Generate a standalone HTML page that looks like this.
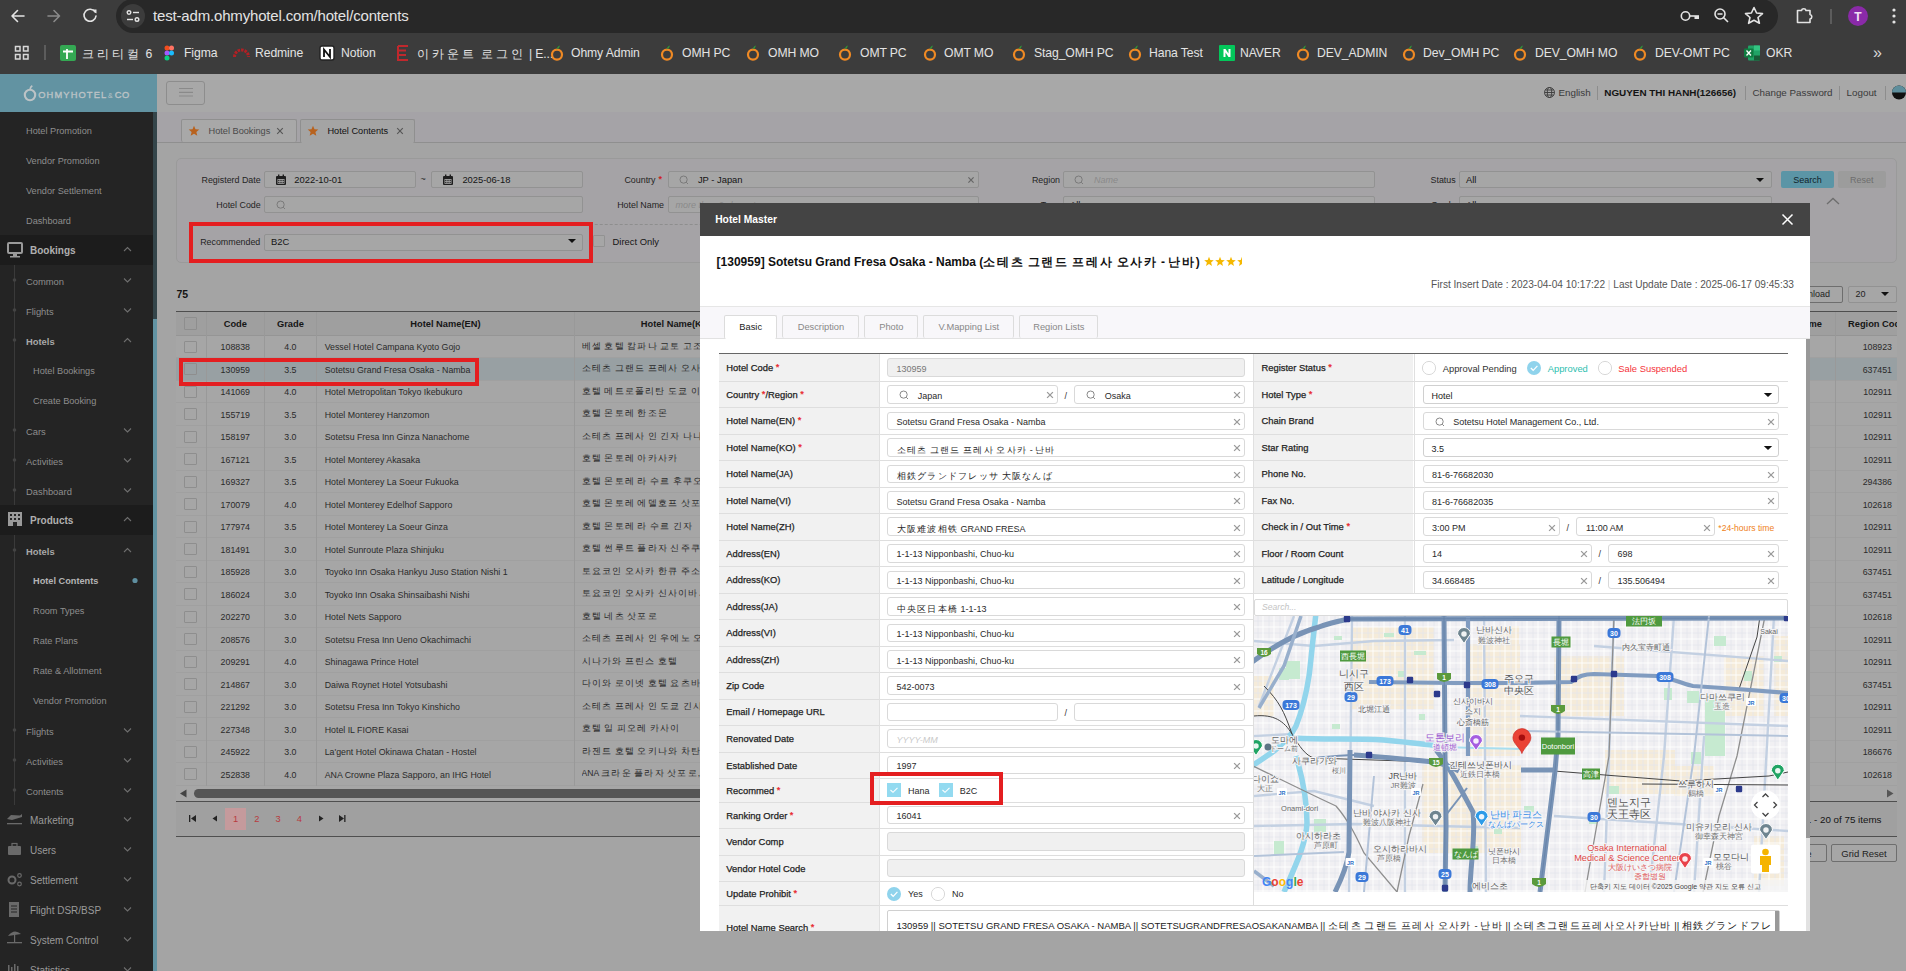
<!DOCTYPE html>
<html><head><meta charset="utf-8"><title>Hotel Contents</title><style>
*{box-sizing:content-box}
html,body{margin:0;padding:0}
body{width:1906px;height:971px;overflow:hidden;position:relative;background:#a4a4a4;font-family:'Liberation Sans',sans-serif}
.bm{position:absolute;top:46px;line-height:14px;font:12.2px 'Liberation Sans',sans-serif;color:#e3e3e3;white-space:nowrap;letter-spacing:-0.1px}
</style></head>
<body>
<div id="chrome" style="position:absolute;left:0;top:0;width:1906px;height:74px;background:#3c3c3c;">
<div style="position:absolute;left:116px;top:-1px;width:1662px;height:34px;border-radius:17px;background:#282828;"></div>
<svg style="position:absolute;left:0;top:0" width="116" height="33">
      <g fill="none" stroke="#e3e3e3" stroke-width="1.6" stroke-linecap="round" stroke-linejoin="round">
        <path d="M24 16 H12 M17.5 10.5 L12 16 L17.5 21.5"/>
      </g>
      <g fill="none" stroke="#8a8a8a" stroke-width="1.6" stroke-linecap="round" stroke-linejoin="round">
        <path d="M48 16 H59.5 M54 10.5 L59.5 16 L54 21.5"/>
      </g>
      <g fill="none" stroke="#e3e3e3" stroke-width="1.6" stroke-linecap="round">
        <path d="M95.2 12.2 A6 6 0 1 0 96 16"/>
      </g>
      <path d="M92.5 9.5 L96.5 9.5 L96.5 13.5 Z" fill="#e3e3e3"/>
    </svg>
<svg style="position:absolute;left:120px;top:3px" width="28" height="28">
      <circle cx="13" cy="13" r="12" fill="#3c3c3c"/>
      <g fill="none" stroke="#e3e3e3" stroke-width="1.4">
        <circle cx="9" cy="9.5" r="1.8"/><path d="M13 9.5 H19"/>
        <circle cx="17" cy="16.5" r="1.8"/><path d="M7 16.5 H13"/>
      </g>
    </svg>
<div style="position:absolute;left:153px;top:7px;font:15px 'Liberation Sans',sans-serif;color:#e3e3e3;letter-spacing:-0.17px;white-space:nowrap">test-adm.ohmyhotel.com/hotel/contents</div>
<svg style="position:absolute;left:1670px;top:0" width="236" height="34">
      <g fill="none" stroke="#e3e3e3" stroke-width="1.6">
        <circle cx="15.5" cy="16" r="4.2"/><path d="M19.7 16 H29"/><rect x="24.5" y="16" width="4.5" height="3" fill="#e3e3e3" stroke="none"/>
        <circle cx="50" cy="14" r="5"/><path d="M53.5 17.5 L58 22 M47.5 14 H52.5"/>
        <path d="M84 7.5 L86.6 13 L92.5 13.6 L88 17.5 L89.4 23.3 L84 20.3 L78.6 23.3 L80 17.5 L75.5 13.6 L81.4 13 Z" stroke-linejoin="round"/>
        <path d="M127.5 10.5 H131.5 A2.3 2.3 0 0 1 136 10.5 H140 V14.5 A2.3 2.3 0 0 1 140 19 V22.5 H127.5 Z" stroke-linejoin="round"/></g>
      <path d="M161 9 V24" stroke="#6a6a6a" stroke-width="1.4"/>
      <circle cx="188" cy="16" r="10" fill="#8a2aa8"/>
      <text x="188" y="20.5" text-anchor="middle" font-family="Liberation Sans" font-size="12" font-weight="bold" fill="#f0e0f5">T</text>
      <g fill="#e3e3e3"><circle cx="224" cy="10" r="1.6"/><circle cx="224" cy="16" r="1.6"/><circle cx="224" cy="22" r="1.6"/></g>
    </svg>
<svg style="position:absolute;left:0;top:38px" width="60" height="30">
      <g fill="none" stroke="#d8d8d8" stroke-width="1.5">
        <rect x="15.5" y="8.5" width="4.5" height="4.5"/><rect x="23.5" y="8.5" width="4.5" height="4.5"/>
        <rect x="15.5" y="16.5" width="4.5" height="4.5"/><rect x="23.5" y="16.5" width="4.5" height="4.5"/>
      </g>
      <path d="M45 7 V22" stroke="#6a6a6a" stroke-width="1.4"/>
    </svg>
<svg style="position:absolute;left:60px;top:45px" width="16" height="16"><rect x="0" y="0" width="16" height="16" rx="2" fill="#34a853"/><path d="M3 6.5 H13 M7 4 V14" stroke="#fff" stroke-width="1.8"/></svg>
<div class="bm" style="left:82px"><span style="letter-spacing:0.25em">크리티컬</span> 6</div>
<svg style="position:absolute;left:164px;top:45px" width="11" height="16"><rect x="0.5" y="0.5" width="5" height="5" rx="2.5" fill="#f24e1e"/><rect x="5" y="0.5" width="5" height="5" rx="2.5" fill="#ff7262"/><rect x="0.5" y="5.5" width="5" height="5" rx="2.5" fill="#a259ff"/><circle cx="7.5" cy="8" r="2.5" fill="#1abcfe"/><rect x="0.5" y="10.5" width="5" height="5" rx="2.5" fill="#0acf83"/></svg>
<div class="bm" style="left:184px">Figma</div>
<svg style="position:absolute;left:233px;top:45px" width="17" height="14"><path d="M1.5 12 A7 7 0 0 1 15.5 12" fill="none" stroke="#b32024" stroke-width="3" stroke-dasharray="2.5 1"/></svg>
<div class="bm" style="left:255px">Redmine</div>
<svg style="position:absolute;left:319px;top:45px" width="16" height="16"><rect x="1" y="1" width="14" height="14" rx="2" fill="#fff" stroke="#222" stroke-width="1.4"/><path d="M5 12 V4.5 L11 12 V4" fill="none" stroke="#111" stroke-width="1.8"/></svg>
<div class="bm" style="left:341px">Notion</div>
<svg style="position:absolute;left:396px;top:44px" width="14" height="18"><path d="M2 2 H12 M2 2 V16 H12 M2 6.5 H10 M2 11 H10" fill="none" stroke="#c0282d" stroke-width="2"/></svg>
<div class="bm" style="left:417px"><span style="letter-spacing:0.25em">이카운트</span> <span style="letter-spacing:0.25em">로그인</span> | E...</div>
<svg style="position:absolute;left:549px;top:42px" width="16" height="22"><circle cx="8" cy="12.6" r="5" fill="none" stroke="#f08a24" stroke-width="2.2"/><path d="M7.5 7.5 Q8.5 4 11 3.5 Q10.5 6.5 7.5 7.5 Z" fill="#2f9a3a"/></svg>
<div class="bm" style="left:571px">Ohmy Admin</div>
<svg style="position:absolute;left:659px;top:42px" width="16" height="22"><circle cx="8" cy="12.6" r="5" fill="none" stroke="#f08a24" stroke-width="2.2"/><path d="M7.5 7.5 Q8.5 4 11 3.5 Q10.5 6.5 7.5 7.5 Z" fill="#2f9a3a"/></svg>
<div class="bm" style="left:682px">OMH PC</div>
<svg style="position:absolute;left:745px;top:42px" width="16" height="22"><circle cx="8" cy="12.6" r="5" fill="none" stroke="#f08a24" stroke-width="2.2"/><path d="M7.5 7.5 Q8.5 4 11 3.5 Q10.5 6.5 7.5 7.5 Z" fill="#2f9a3a"/></svg>
<div class="bm" style="left:768px">OMH MO</div>
<svg style="position:absolute;left:837px;top:42px" width="16" height="22"><circle cx="8" cy="12.6" r="5" fill="none" stroke="#f08a24" stroke-width="2.2"/><path d="M7.5 7.5 Q8.5 4 11 3.5 Q10.5 6.5 7.5 7.5 Z" fill="#2f9a3a"/></svg>
<div class="bm" style="left:860px">OMT PC</div>
<svg style="position:absolute;left:922px;top:42px" width="16" height="22"><circle cx="8" cy="12.6" r="5" fill="none" stroke="#f08a24" stroke-width="2.2"/><path d="M7.5 7.5 Q8.5 4 11 3.5 Q10.5 6.5 7.5 7.5 Z" fill="#2f9a3a"/></svg>
<div class="bm" style="left:944px">OMT MO</div>
<svg style="position:absolute;left:1011px;top:42px" width="16" height="22"><circle cx="8" cy="12.6" r="5" fill="none" stroke="#f08a24" stroke-width="2.2"/><path d="M7.5 7.5 Q8.5 4 11 3.5 Q10.5 6.5 7.5 7.5 Z" fill="#2f9a3a"/></svg>
<div class="bm" style="left:1034px">Stag_OMH PC</div>
<svg style="position:absolute;left:1127px;top:42px" width="16" height="22"><circle cx="8" cy="12.6" r="5" fill="none" stroke="#f08a24" stroke-width="2.2"/><path d="M7.5 7.5 Q8.5 4 11 3.5 Q10.5 6.5 7.5 7.5 Z" fill="#2f9a3a"/></svg>
<div class="bm" style="left:1149px">Hana Test</div>
<svg style="position:absolute;left:1219px;top:45px" width="16" height="16"><rect width="16" height="16" rx="1" fill="#03c75a"/><path d="M4.5 12 V4 H6.5 L9.5 8.5 V4 H11.5 V12 H9.5 L6.5 7.5 V12 Z" fill="#fff"/></svg>
<div class="bm" style="left:1240px">NAVER</div>
<svg style="position:absolute;left:1295px;top:42px" width="16" height="22"><circle cx="8" cy="12.6" r="5" fill="none" stroke="#f08a24" stroke-width="2.2"/><path d="M7.5 7.5 Q8.5 4 11 3.5 Q10.5 6.5 7.5 7.5 Z" fill="#2f9a3a"/></svg>
<div class="bm" style="left:1317px">DEV_ADMIN</div>
<svg style="position:absolute;left:1401px;top:42px" width="16" height="22"><circle cx="8" cy="12.6" r="5" fill="none" stroke="#f08a24" stroke-width="2.2"/><path d="M7.5 7.5 Q8.5 4 11 3.5 Q10.5 6.5 7.5 7.5 Z" fill="#2f9a3a"/></svg>
<div class="bm" style="left:1423px">Dev_OMH PC</div>
<svg style="position:absolute;left:1512px;top:42px" width="16" height="22"><circle cx="8" cy="12.6" r="5" fill="none" stroke="#f08a24" stroke-width="2.2"/><path d="M7.5 7.5 Q8.5 4 11 3.5 Q10.5 6.5 7.5 7.5 Z" fill="#2f9a3a"/></svg>
<div class="bm" style="left:1535px">DEV_OMH MO</div>
<svg style="position:absolute;left:1632px;top:42px" width="16" height="22"><circle cx="8" cy="12.6" r="5" fill="none" stroke="#f08a24" stroke-width="2.2"/><path d="M7.5 7.5 Q8.5 4 11 3.5 Q10.5 6.5 7.5 7.5 Z" fill="#2f9a3a"/></svg>
<div class="bm" style="left:1655px">DEV-OMT PC</div>
<svg style="position:absolute;left:1744px;top:45px" width="16" height="16"><rect x="4" y="0.5" width="12" height="15" rx="1" fill="#21a366"/><rect x="10" y="0.5" width="6" height="5" fill="#33c481"/><rect x="10" y="10.5" width="6" height="5" fill="#185c37"/><rect x="0" y="3.5" width="9.5" height="9" rx="1" fill="#107c41"/><path d="M2.5 5.5 L7 10.5 M7 5.5 L2.5 10.5" stroke="#fff" stroke-width="1.3"/></svg>
<div class="bm" style="left:1766px">OKR</div>
<div style="position:absolute;left:1873px;top:44px;font:16px 'Liberation Sans';color:#d8d8d8">&#187;</div>
</div>
<div id="pg" style="position:absolute;left:0;top:0;width:1906px;height:971px">
<div id="sb" style="position:absolute;left:0;top:74px;width:157px;height:897px;background:#242424;overflow:hidden">
<div style="position:absolute;left:0;top:0;width:157px;height:38px;background:#6293a2"></div>
<svg style="position:absolute;left:20px;top:8px" width="115" height="24">
      <circle cx="10" cy="13" r="5.2" fill="none" stroke="#bcc3c6" stroke-width="2.1"/>
      <path d="M10 7.8 Q10.3 5 12.3 3.8" fill="none" stroke="#bcc3c6" stroke-width="1.7"/>
      <text x="18.2" y="16.3" font-family="Liberation Sans" font-size="9.3" fill="#bcc3c6" stroke="#bcc3c6" stroke-width="0.35" textLength="68" lengthAdjust="spacing">OHMYHOTEL</text>
      <text x="88" y="16.3" font-family="Liberation Sans" font-size="7" fill="#bcc3c6">&amp;</text>
      <text x="94.7" y="16.3" font-family="Liberation Sans" font-size="9.3" fill="#bcc3c6" stroke="#bcc3c6" stroke-width="0.35" textLength="14.5" lengthAdjust="spacing">CO</text>
    </svg>
<div style="position:absolute;left:153px;top:38px;width:4px;height:207px;background:#34454a"></div>
<div style="position:absolute;left:153px;top:245px;width:4px;height:652px;background:#6293a2"></div>
<div style="position:absolute;left:0;top:161px;width:153px;height:30px;background:#1c1c1c"></div>
<div style="position:absolute;left:0;top:431px;width:153px;height:30px;background:#1c1c1c"></div>
<div style="position:absolute;left:14px;top:191px;width:1px;height:240px;background:#3a3a3a"></div>
<div style="position:absolute;left:14px;top:461px;width:1px;height:270px;background:#3a3a3a"></div>
<div style="position:absolute;left:26px;top:51.5px;line-height:12px;white-space:nowrap;font:9.2px 'Liberation Sans';color:#8e8e8e">Hotel Promotion</div>
<div style="position:absolute;left:26px;top:81.5px;line-height:12px;white-space:nowrap;font:9.2px 'Liberation Sans';color:#8e8e8e">Vendor Promotion</div>
<div style="position:absolute;left:26px;top:111.5px;line-height:12px;white-space:nowrap;font:9.2px 'Liberation Sans';color:#8e8e8e">Vendor Settlement</div>
<div style="position:absolute;left:26px;top:141.5px;line-height:12px;white-space:nowrap;font:9.2px 'Liberation Sans';color:#8e8e8e">Dashboard</div>
<div style="position:absolute;left:30px;top:170.5px;line-height:12px;white-space:nowrap;font:bold 10px 'Liberation Sans';color:#b0b0b0">Bookings</div>
<div style="position:absolute;left:26px;top:201.5px;line-height:12px;white-space:nowrap;font:9.4px 'Liberation Sans';color:#8e8e8e">Common</div>
<div style="position:absolute;left:26px;top:231.5px;line-height:12px;white-space:nowrap;font:9.4px 'Liberation Sans';color:#8e8e8e">Flights</div>
<div style="position:absolute;left:26px;top:261.5px;line-height:12px;white-space:nowrap;font:bold 9.4px 'Liberation Sans';color:#a8a8a8">Hotels</div>
<div style="position:absolute;left:33px;top:291.5px;line-height:12px;white-space:nowrap;font:9.2px 'Liberation Sans';color:#8e8e8e">Hotel Bookings</div>
<div style="position:absolute;left:33px;top:321.5px;line-height:12px;white-space:nowrap;font:9.2px 'Liberation Sans';color:#8e8e8e">Create Booking</div>
<div style="position:absolute;left:26px;top:351.5px;line-height:12px;white-space:nowrap;font:9.4px 'Liberation Sans';color:#8e8e8e">Cars</div>
<div style="position:absolute;left:26px;top:381.5px;line-height:12px;white-space:nowrap;font:9.4px 'Liberation Sans';color:#8e8e8e">Activities</div>
<div style="position:absolute;left:26px;top:411.5px;line-height:12px;white-space:nowrap;font:9.4px 'Liberation Sans';color:#8e8e8e">Dashboard</div>
<div style="position:absolute;left:30px;top:440.5px;line-height:12px;white-space:nowrap;font:bold 10px 'Liberation Sans';color:#b0b0b0">Products</div>
<div style="position:absolute;left:26px;top:471.5px;line-height:12px;white-space:nowrap;font:bold 9.4px 'Liberation Sans';color:#a8a8a8">Hotels</div>
<div style="position:absolute;left:33px;top:501.5px;line-height:12px;white-space:nowrap;font:bold 9.2px 'Liberation Sans';color:#b4b4b4">Hotel Contents</div>
<div style="position:absolute;left:33px;top:531.5px;line-height:12px;white-space:nowrap;font:9.2px 'Liberation Sans';color:#8e8e8e">Room Types</div>
<div style="position:absolute;left:33px;top:561.5px;line-height:12px;white-space:nowrap;font:9.2px 'Liberation Sans';color:#8e8e8e">Rate Plans</div>
<div style="position:absolute;left:33px;top:591.5px;line-height:12px;white-space:nowrap;font:9.2px 'Liberation Sans';color:#8e8e8e">Rate &amp; Allotment</div>
<div style="position:absolute;left:33px;top:621.5px;line-height:12px;white-space:nowrap;font:9.2px 'Liberation Sans';color:#8e8e8e">Vendor Promotion</div>
<div style="position:absolute;left:26px;top:651.5px;line-height:12px;white-space:nowrap;font:9.4px 'Liberation Sans';color:#8e8e8e">Flights</div>
<div style="position:absolute;left:26px;top:681.5px;line-height:12px;white-space:nowrap;font:9.4px 'Liberation Sans';color:#8e8e8e">Activities</div>
<div style="position:absolute;left:26px;top:711.5px;line-height:12px;white-space:nowrap;font:9.4px 'Liberation Sans';color:#8e8e8e">Contents</div>
<div style="position:absolute;left:30px;top:740.5px;line-height:12px;white-space:nowrap;font:10px 'Liberation Sans';color:#9a9a9a">Marketing</div>
<div style="position:absolute;left:30px;top:770.5px;line-height:12px;white-space:nowrap;font:10px 'Liberation Sans';color:#9a9a9a">Users</div>
<div style="position:absolute;left:30px;top:800.5px;line-height:12px;white-space:nowrap;font:10px 'Liberation Sans';color:#9a9a9a">Settlement</div>
<div style="position:absolute;left:30px;top:830.5px;line-height:12px;white-space:nowrap;font:10px 'Liberation Sans';color:#9a9a9a">Flight DSR/BSP</div>
<div style="position:absolute;left:30px;top:860.5px;line-height:12px;white-space:nowrap;font:10px 'Liberation Sans';color:#9a9a9a">System Control</div>
<div style="position:absolute;left:30px;top:890.5px;line-height:12px;white-space:nowrap;font:10px 'Liberation Sans';color:#9a9a9a">Statistics</div>
<svg style="position:absolute;left:0;top:0" width="157" height="897"><path d="M124.0 177 L127.5 173.5 L131.0 177" fill="none" stroke="#6e6e6e" stroke-width="1.1"/><path d="M124.0 204.5 L127.5 208 L131.0 204.5" fill="none" stroke="#6e6e6e" stroke-width="1.1"/><circle cx="14.5" cy="206" r="1.8" fill="#444"/><path d="M124.0 234.5 L127.5 238 L131.0 234.5" fill="none" stroke="#6e6e6e" stroke-width="1.1"/><circle cx="14.5" cy="236" r="1.8" fill="#444"/><path d="M124.0 268 L127.5 264.5 L131.0 268" fill="none" stroke="#6e6e6e" stroke-width="1.1"/><circle cx="14.5" cy="266" r="1.8" fill="#444"/><path d="M124.0 354.5 L127.5 358 L131.0 354.5" fill="none" stroke="#6e6e6e" stroke-width="1.1"/><circle cx="14.5" cy="356" r="1.8" fill="#444"/><path d="M124.0 384.5 L127.5 388 L131.0 384.5" fill="none" stroke="#6e6e6e" stroke-width="1.1"/><circle cx="14.5" cy="386" r="1.8" fill="#444"/><path d="M124.0 414.5 L127.5 418 L131.0 414.5" fill="none" stroke="#6e6e6e" stroke-width="1.1"/><circle cx="14.5" cy="416" r="1.8" fill="#444"/><path d="M124.0 447 L127.5 443.5 L131.0 447" fill="none" stroke="#6e6e6e" stroke-width="1.1"/><path d="M124.0 478 L127.5 474.5 L131.0 478" fill="none" stroke="#6e6e6e" stroke-width="1.1"/><circle cx="14.5" cy="476" r="1.8" fill="#444"/><path d="M124.0 654.5 L127.5 658 L131.0 654.5" fill="none" stroke="#6e6e6e" stroke-width="1.1"/><circle cx="14.5" cy="656" r="1.8" fill="#444"/><path d="M124.0 684.5 L127.5 688 L131.0 684.5" fill="none" stroke="#6e6e6e" stroke-width="1.1"/><circle cx="14.5" cy="686" r="1.8" fill="#444"/><path d="M124.0 714.5 L127.5 718 L131.0 714.5" fill="none" stroke="#6e6e6e" stroke-width="1.1"/><circle cx="14.5" cy="716" r="1.8" fill="#444"/><path d="M124.0 743.5 L127.5 747 L131.0 743.5" fill="none" stroke="#6e6e6e" stroke-width="1.1"/><path d="M124.0 773.5 L127.5 777 L131.0 773.5" fill="none" stroke="#6e6e6e" stroke-width="1.1"/><path d="M124.0 803.5 L127.5 807 L131.0 803.5" fill="none" stroke="#6e6e6e" stroke-width="1.1"/><path d="M124.0 833.5 L127.5 837 L131.0 833.5" fill="none" stroke="#6e6e6e" stroke-width="1.1"/><path d="M124.0 863.5 L127.5 867 L131.0 863.5" fill="none" stroke="#6e6e6e" stroke-width="1.1"/><path d="M124.0 893.5 L127.5 897 L131.0 893.5" fill="none" stroke="#6e6e6e" stroke-width="1.1"/><circle cx="135" cy="506.5" r="2.6" fill="#5f8fa0"/><g fill="#9a9a9a"><rect x="8" y="169" width="14" height="10" rx="1" fill="none" stroke="#9a9a9a" stroke-width="2"/><rect x="13" y="180" width="4" height="2"/><rect x="10" y="182" width="10" height="1.5"/></g><g><rect x="8" y="438" width="14" height="14" fill="#9a9a9a"/><g fill="#242424"><rect x="10" y="440" width="2" height="2"/><rect x="14" y="440" width="2" height="2"/><rect x="18" y="440" width="2" height="2"/><rect x="10" y="444" width="2" height="2"/><rect x="14" y="444" width="2" height="2"/><rect x="18" y="444" width="2" height="2"/><rect x="13" y="448" width="4" height="4"/></g></g><g fill="#6a6a6a"><path d="M7 745 L11 741 L20 741.5 L22 740 L22 743 L12 746 Z"/><rect x="7" y="749" width="15" height="1.3"/></g><g fill="#6a6a6a"><rect x="8" y="772" width="13" height="9" rx="1"/><rect x="12" y="769.5" width="5" height="3" fill="none" stroke="#6a6a6a" stroke-width="1.2"/></g><g fill="none" stroke="#6a6a6a" stroke-width="2"><circle cx="12" cy="806" r="3.5"/></g><g fill="none" stroke="#6a6a6a" stroke-width="1.2"><circle cx="19.5" cy="801.5" r="1.8"/><circle cx="19.5" cy="810" r="1.8"/></g><g fill="#6a6a6a"><rect x="9" y="828" width="10" height="15"/></g><g stroke="#242424" stroke-width="1"><path d="M11 832 H17 M11 835 H17 M11 838 H17"/></g><g fill="#6a6a6a"><path d="M8 862 Q14 854 21 860 Z"/><rect x="14" y="860" width="1.2" height="8"/><rect x="7" y="868" width="15" height="1.3"/></g><g fill="#6a6a6a"><rect x="8" y="891" width="1.5" height="6"/><rect x="11" y="893" width="1.5" height="4"/><rect x="14" y="890" width="1.5" height="7"/><rect x="17" y="892" width="1.5" height="5"/></g></svg>
</div>
<div style="position:absolute;left:157px;top:74px;width:1749px;height:38px;background:#a8a8a8;border-radius:0px;"></div>
<div style="position:absolute;left:166px;top:81px;width:37px;height:22px;background:#a8a8a8;border:1px solid #8d8d8d;border-radius:3px;"></div>
<svg style="position:absolute;left:178px;top:86px" width="16" height="14"><g stroke="#8a8a8a" stroke-width="1.2"><path d="M1 2.5 H15 M1 6.3 H15 M1 10 H15"/></g></svg>
<svg style="position:absolute;left:1543px;top:86px" width="13" height="13"><g fill="none" stroke="#3a3a3a" stroke-width="0.9"><circle cx="6.5" cy="6.5" r="5"/><ellipse cx="6.5" cy="6.5" rx="2.2" ry="5"/><path d="M1.5 6.5 H11.5 M2.3 4 H10.7 M2.3 9 H10.7"/></g></svg>
<div style="position:absolute;left:1558.5px;top:86.7px;line-height:12px;font:9.8px 'Liberation Sans';color:#3a3a3a;white-space:nowrap;">English</div>
<div style="position:absolute;left:1597px;top:86px;width:1px;height:14px;background:#8d8d8d;border-radius:0px;"></div>
<div style="position:absolute;left:1604.3px;top:86.7px;line-height:12px;font:bold 9.9px 'Liberation Sans';color:#141414;white-space:nowrap;">NGUYEN THI HANH(126656)</div>
<div style="position:absolute;left:1745px;top:86px;width:1px;height:14px;background:#8d8d8d;border-radius:0px;"></div>
<div style="position:absolute;left:1752.5px;top:86.7px;line-height:12px;font:9.8px 'Liberation Sans';color:#3a3a3a;white-space:nowrap;">Change Password</div>
<div style="position:absolute;left:1839px;top:86px;width:1px;height:14px;background:#8d8d8d;border-radius:0px;"></div>
<div style="position:absolute;left:1846.6px;top:86.7px;line-height:12px;font:9.8px 'Liberation Sans';color:#3a3a3a;white-space:nowrap;">Logout</div>
<div style="position:absolute;left:1885px;top:86px;width:1px;height:14px;background:#8d8d8d;border-radius:0px;"></div>
<svg style="position:absolute;left:1891px;top:85px" width="15" height="15"><circle cx="8" cy="7.5" r="7" fill="#111"/><path d="M1 7.5 A7 7 0 0 1 15 7.5 Z" fill="#5e8e9c"/></svg>
<div style="position:absolute;left:157px;top:112px;width:1749px;height:30px;background:#a5a3a7;border-radius:0px;"></div>
<div style="position:absolute;left:157px;top:142px;width:1749px;height:1px;background:#8f8f8f;border-radius:0px;"></div>
<div style="position:absolute;left:181px;top:119px;width:113.5px;height:22px;background:#a8a8a8;border:1px solid #8f8f8f;border-radius:2px;border-bottom:none;"></div>
<svg style="position:absolute;left:187.6px;top:125px" width="12" height="12"><path d="M6 0.8 L7.5 4.3 L11.3 4.6 L8.4 7.1 L9.3 10.8 L6 8.8 L2.7 10.8 L3.6 7.1 L0.7 4.6 L4.5 4.3 Z" fill="#b8621e"/></svg>
<div style="position:absolute;left:208.5px;top:125.80000000000001px;line-height:12px;font:9.2px 'Liberation Sans';color:#4a4a4a;white-space:nowrap;">Hotel Bookings</div>
<svg style="position:absolute;left:273.7px;top:124.5px" width="12" height="12"><path d="M3.2 3.2 L8.8 8.8 M8.8 3.2 L3.2 8.8" stroke="#555" stroke-width="1.1"/></svg>
<div style="position:absolute;left:300.3px;top:119px;width:113.19999999999999px;height:23px;background:#a4a4a4;border:1px solid #8f8f8f;border-radius:2px;border-bottom:none;"></div>
<svg style="position:absolute;left:306.6px;top:125px" width="12" height="12"><path d="M6 0.8 L7.5 4.3 L11.3 4.6 L8.4 7.1 L9.3 10.8 L6 8.8 L2.7 10.8 L3.6 7.1 L0.7 4.6 L4.5 4.3 Z" fill="#b8621e"/></svg>
<div style="position:absolute;left:327.4px;top:125.80000000000001px;line-height:12px;font:9.2px 'Liberation Sans';color:#111111;white-space:nowrap;">Hotel Contents</div>
<svg style="position:absolute;left:393.7px;top:124.5px" width="12" height="12"><path d="M3.2 3.2 L8.8 8.8 M8.8 3.2 L3.2 8.8" stroke="#555" stroke-width="1.1"/></svg>
<div style="position:absolute;left:176px;top:158px;width:1719px;height:103px;background:#a5a3a6;border:1px solid #9a9a9a;border-radius:5px;"></div>
<div style="position:absolute;left:-739.3px;width:1000px;text-align:right;top:175.10000000000002px;line-height:12px;font:8.9px 'Liberation Sans';color:#242424;white-space:nowrap;">Registerd Date</div>
<div style="position:absolute;left:263.5px;top:170.5px;width:150.0px;height:15.5px;background:#a6a6a6;border:1px solid #929292;border-radius:2px;"></div>
<svg style="position:absolute;left:274.5px;top:173.8px" width="12" height="12"><rect x="1" y="2" width="10" height="9" rx="1" fill="#1e1e1e"/><rect x="2.5" y="5" width="7" height="4.8" fill="#a6a6a6"/><g fill="#1e1e1e"><rect x="3.2" y="5.8" width="1.2" height="1.2"/><rect x="5.4" y="5.8" width="1.2" height="1.2"/><rect x="7.6" y="5.8" width="1.2" height="1.2"/><rect x="3.2" y="7.8" width="1.2" height="1.2"/><rect x="5.4" y="7.8" width="1.2" height="1.2"/><rect x="7.6" y="7.8" width="1.2" height="1.2"/></g><rect x="3" y="0.5" width="1.4" height="3" fill="#1e1e1e"/><rect x="7.6" y="0.5" width="1.4" height="3" fill="#1e1e1e"/></svg>
<div style="position:absolute;left:294.3px;top:175.10000000000002px;line-height:12px;font:9.4px 'Liberation Sans';color:#151515;white-space:nowrap;margin-top:-1px;">2022-10-01</div>
<div style="position:absolute;left:420.5px;top:174.10000000000002px;line-height:12px;font:9px 'Liberation Sans';color:#2a2a2a;white-space:nowrap;">~</div>
<div style="position:absolute;left:431.2px;top:170.5px;width:150.2px;height:15.5px;background:#a6a6a6;border:1px solid #929292;border-radius:2px;"></div>
<svg style="position:absolute;left:442px;top:173.8px" width="12" height="12"><rect x="1" y="2" width="10" height="9" rx="1" fill="#1e1e1e"/><rect x="2.5" y="5" width="7" height="4.8" fill="#a6a6a6"/><g fill="#1e1e1e"><rect x="3.2" y="5.8" width="1.2" height="1.2"/><rect x="5.4" y="5.8" width="1.2" height="1.2"/><rect x="7.6" y="5.8" width="1.2" height="1.2"/><rect x="3.2" y="7.8" width="1.2" height="1.2"/><rect x="5.4" y="7.8" width="1.2" height="1.2"/><rect x="7.6" y="7.8" width="1.2" height="1.2"/></g><rect x="3" y="0.5" width="1.4" height="3" fill="#1e1e1e"/><rect x="7.6" y="0.5" width="1.4" height="3" fill="#1e1e1e"/></svg>
<div style="position:absolute;left:462.4px;top:175.10000000000002px;line-height:12px;font:9.4px 'Liberation Sans';color:#151515;white-space:nowrap;margin-top:-1px;">2025-06-18</div>
<div style="position:absolute;left:-344.5px;width:1000px;text-align:right;top:175.10000000000002px;line-height:12px;font:8.9px 'Liberation Sans';color:#242424;white-space:nowrap;">Country</div>
<div style="position:absolute;left:658.5px;top:173.60000000000002px;line-height:12px;font:bold 9px 'Liberation Sans';color:#c22;white-space:nowrap;">*</div>
<div style="position:absolute;left:667.5px;top:170.5px;width:309.5px;height:15.5px;background:#a6a6a6;border:1px solid #929292;border-radius:2px;"></div>
<svg style="position:absolute;left:677.5px;top:173.8px" width="12" height="12"><circle cx="5.6" cy="5.6" r="3.6" fill="none" stroke="#7a7a7a" stroke-width="1"/><path d="M8.2 8.2 L10 10" stroke="#7a7a7a" stroke-width="1"/></svg>
<div style="position:absolute;left:697.9px;top:175.10000000000002px;line-height:12px;font:9.4px 'Liberation Sans';color:#151515;white-space:nowrap;margin-top:-1px;">JP - Japan</div>
<svg style="position:absolute;left:965.4px;top:173.8px" width="12" height="12"><path d="M3.4 3.4 L8.6 8.6 M8.6 3.4 L3.4 8.6" stroke="#666" stroke-width="1.2"/></svg>
<div style="position:absolute;left:60px;width:1000px;text-align:right;top:175.10000000000002px;line-height:12px;font:8.9px 'Liberation Sans';color:#242424;white-space:nowrap;">Region</div>
<div style="position:absolute;left:1062.6px;top:170.5px;width:310.9000000000001px;height:15.5px;background:#a6a6a6;border:1px solid #929292;border-radius:2px;"></div>
<svg style="position:absolute;left:1073px;top:173.8px" width="12" height="12"><circle cx="5.6" cy="5.6" r="3.6" fill="none" stroke="#7a7a7a" stroke-width="1"/><path d="M8.2 8.2 L10 10" stroke="#7a7a7a" stroke-width="1"/></svg>
<div style="position:absolute;left:1094px;top:175.10000000000002px;line-height:12px;font:italic 9px 'Liberation Sans';color:#8a8a8a;white-space:nowrap;">Name</div>
<div style="position:absolute;left:455.70000000000005px;width:1000px;text-align:right;top:175.10000000000002px;line-height:12px;font:8.9px 'Liberation Sans';color:#242424;white-space:nowrap;">Status</div>
<div style="position:absolute;left:1458.6px;top:170.5px;width:311.0px;height:15.5px;background:#a6a6a6;border:1px solid #929292;border-radius:2px;"></div>
<div style="position:absolute;left:1466px;top:175.10000000000002px;line-height:12px;font:9.4px 'Liberation Sans';color:#151515;white-space:nowrap;margin-top:-1px;">All</div>
<svg style="position:absolute;left:1754px;top:173.8px" width="12" height="12"><path d="M2 4.0 L10 4.0 L6 8.0 Z" fill="#111"/></svg>
<div style="position:absolute;left:1781px;top:170.5px;width:53px;height:17.5px;background:#5b95a6;border-radius:2px;"></div>
<div style="position:absolute;left:1657.5px;width:300px;text-align:center;top:175.10000000000002px;line-height:12px;font:9px 'Liberation Sans';color:#10232a;white-space:nowrap;">Search</div>
<div style="position:absolute;left:1838px;top:170.5px;width:47.5px;height:17.5px;background:#9c9c9c;border-radius:2px;"></div>
<div style="position:absolute;left:1711.7px;width:300px;text-align:center;top:175.10000000000002px;line-height:12px;font:9px 'Liberation Sans';color:#6e6e6e;white-space:nowrap;">Reset</div>
<div style="position:absolute;left:-739.3px;width:1000px;text-align:right;top:200.3px;line-height:12px;font:8.9px 'Liberation Sans';color:#242424;white-space:nowrap;">Hotel Code</div>
<div style="position:absolute;left:263.5px;top:195.8px;width:317.9px;height:15.5px;background:#a6a6a6;border:1px solid #929292;border-radius:2px;"></div>
<svg style="position:absolute;left:274.5px;top:199px" width="12" height="12"><circle cx="5.6" cy="5.6" r="3.6" fill="none" stroke="#7a7a7a" stroke-width="1"/><path d="M8.2 8.2 L10 10" stroke="#7a7a7a" stroke-width="1"/></svg>
<div style="position:absolute;left:-336px;width:1000px;text-align:right;top:200.3px;line-height:12px;font:8.9px 'Liberation Sans';color:#242424;white-space:nowrap;">Hotel Name</div>
<div style="position:absolute;left:667.5px;top:195.8px;width:309.5px;height:15.5px;background:#a6a6a6;border:1px solid #929292;border-radius:2px;"></div>
<div style="position:absolute;left:675.5px;top:200.3px;line-height:12px;font:italic 9px 'Liberation Sans';color:#8a8a8a;white-space:nowrap;">more than 2 characters</div>
<div style="position:absolute;left:60px;width:1000px;text-align:right;top:200.3px;line-height:12px;font:8.9px 'Liberation Sans';color:#242424;white-space:nowrap;">Type</div>
<div style="position:absolute;left:1062.6px;top:195.8px;width:310.9000000000001px;height:15.5px;background:#a6a6a6;border:1px solid #929292;border-radius:2px;"></div>
<div style="position:absolute;left:1070px;top:200.3px;line-height:12px;font:9.4px 'Liberation Sans';color:#151515;white-space:nowrap;margin-top:-1px;">All</div>
<div style="position:absolute;left:455.70000000000005px;width:1000px;text-align:right;top:200.3px;line-height:12px;font:8.9px 'Liberation Sans';color:#242424;white-space:nowrap;">Grade</div>
<div style="position:absolute;left:1458.6px;top:195.8px;width:311.0px;height:15.5px;background:#a6a6a6;border:1px solid #929292;border-radius:2px;"></div>
<div style="position:absolute;left:1466px;top:200.3px;line-height:12px;font:9.4px 'Liberation Sans';color:#151515;white-space:nowrap;margin-top:-1px;">All</div>
<svg style="position:absolute;left:1825px;top:196px" width="16" height="10"><path d="M2 8 L8 2.5 L14 8" fill="none" stroke="#6e6e6e" stroke-width="1.3"/></svg>
<div style="position:absolute;left:190px;top:223.5px;width:1582px;height:0;border-top:1px dashed #8e8e8e"></div>
<div style="position:absolute;left:-739.7px;width:1000px;text-align:right;top:236.5px;line-height:12px;font:8.9px 'Liberation Sans';color:#242424;white-space:nowrap;">Recommended</div>
<div style="position:absolute;left:263.5px;top:233.7px;width:317.9px;height:15.300000000000011px;background:#a6a6a6;border:1px solid #929292;border-radius:2px;"></div>
<div style="position:absolute;left:271px;top:236.5px;line-height:12px;font:9.4px 'Liberation Sans';color:#151515;white-space:nowrap;margin-top:-1px;">B2C</div>
<svg style="position:absolute;left:566px;top:235.2px" width="12" height="12"><path d="M2 4.0 L10 4.0 L6 8.0 Z" fill="#111"/></svg>
<div style="position:absolute;left:592.5px;top:234.5px;width:10.5px;height:10.5px;background:#a6a6a6;border:1px solid #929292;border-radius:1px;"></div>
<div style="position:absolute;left:612.6px;top:236.5px;line-height:12px;font:9.4px 'Liberation Sans';color:#151515;white-space:nowrap;margin-top:-1px;">Direct Only</div>
<div style="position:absolute;left:176.4px;top:287.6px;line-height:12px;font:bold 10.5px 'Liberation Sans';color:#141414;white-space:nowrap;">75</div>
<div style="position:absolute;left:1760px;top:285.5px;width:81px;height:15.5px;background:#a6a6a6;border:1px solid #6e6e6e;border-radius:2px;"></div>
<div style="position:absolute;left:1790px;top:289.3px;line-height:12px;font:9px 'Liberation Sans';color:#1e1e1e;white-space:nowrap;">Download</div>
<div style="position:absolute;left:1847.5px;top:285.5px;width:47.0px;height:15.5px;background:#a6a6a6;border:1px solid #929292;border-radius:2px;"></div>
<div style="position:absolute;left:1855.5px;top:289.3px;line-height:12px;font:9px 'Liberation Sans';color:#1e1e1e;white-space:nowrap;">20</div>
<svg style="position:absolute;left:1878.5px;top:288px" width="12" height="12"><path d="M2 4.0 L10 4.0 L6 8.0 Z" fill="#111"/></svg>
<div style="position:absolute;left:176px;top:311px;width:1721px;height:1.1999999999999886px;background:#4e4e4e;border-radius:0px;"></div>
<div style="position:absolute;left:176px;top:312.2px;width:1721px;height:23.30000000000001px;background:#9f9f9f;border-radius:0px;"></div>
<div style="position:absolute;left:176px;top:335px;width:1721px;height:0.8000000000000114px;background:#959595;border-radius:0px;"></div>
<div style="position:absolute;left:176px;top:335.5px;width:1721px;height:22.5px;background:#a6a6a6;border-radius:0px;"></div>
<div style="position:absolute;left:176px;top:357.4px;width:1721px;height:0.6000000000000227px;background:#a0a0a0;border-radius:0px;"></div>
<div style="position:absolute;left:184.2px;top:340.55px;width:10.600000000000023px;height:10.399999999999977px;background:none;border:1px solid #8e8e8e;border-radius:1px;"></div>
<div style="position:absolute;left:85.30000000000001px;width:300px;text-align:center;top:342.05px;line-height:12px;font:8.8px 'Liberation Sans';color:#2a2a2a;white-space:nowrap;">108838</div>
<div style="position:absolute;left:140.39999999999998px;width:300px;text-align:center;top:342.05px;line-height:12px;font:8.8px 'Liberation Sans';color:#2a2a2a;white-space:nowrap;">4.0</div>
<div style="position:absolute;left:324.7px;top:342.05px;line-height:12px;font:8.8px 'Liberation Sans';color:#2a2a2a;white-space:nowrap;">Vessel Hotel Campana Kyoto Gojo</div>
<div style="position:absolute;left:581.6px;top:340.75px;width:118px;overflow:hidden;line-height:12px;font:8.6px 'Liberation Sans';color:#2a2a2a;white-space:nowrap"><span style="letter-spacing:0.14em">베셀</span> <span style="letter-spacing:0.14em">호텔</span> <span style="letter-spacing:0.14em">캄파나</span> <span style="letter-spacing:0.14em">교토</span> <span style="letter-spacing:0.14em">고조</span></div>
<div style="position:absolute;left:892px;width:1000px;text-align:right;top:342.05px;line-height:12px;font:8.8px 'Liberation Sans';color:#2a2a2a;white-space:nowrap;">108923</div>
<div style="position:absolute;left:176px;top:358.0px;width:1721px;height:22.5px;background:#98a0a3;border-radius:0px;"></div>
<div style="position:absolute;left:176px;top:379.9px;width:1721px;height:0.6000000000000227px;background:#a0a0a0;border-radius:0px;"></div>
<div style="position:absolute;left:184.2px;top:363.05px;width:10.600000000000023px;height:10.399999999999977px;background:none;border:1px solid #8e8e8e;border-radius:1px;"></div>
<div style="position:absolute;left:85.30000000000001px;width:300px;text-align:center;top:364.55px;line-height:12px;font:8.8px 'Liberation Sans';color:#2a2a2a;white-space:nowrap;">130959</div>
<div style="position:absolute;left:140.39999999999998px;width:300px;text-align:center;top:364.55px;line-height:12px;font:8.8px 'Liberation Sans';color:#2a2a2a;white-space:nowrap;">3.5</div>
<div style="position:absolute;left:324.7px;top:364.55px;line-height:12px;font:8.8px 'Liberation Sans';color:#2a2a2a;white-space:nowrap;">Sotetsu Grand Fresa Osaka - Namba</div>
<div style="position:absolute;left:581.6px;top:363.25px;width:118px;overflow:hidden;line-height:12px;font:8.6px 'Liberation Sans';color:#2a2a2a;white-space:nowrap"><span style="letter-spacing:0.14em">소테츠</span> <span style="letter-spacing:0.14em">그랜드</span> <span style="letter-spacing:0.14em">프레사</span> <span style="letter-spacing:0.14em">오사카</span> - <span style="letter-spacing:0.14em">난바</span></div>
<div style="position:absolute;left:892px;width:1000px;text-align:right;top:364.55px;line-height:12px;font:8.8px 'Liberation Sans';color:#2a2a2a;white-space:nowrap;">637451</div>
<div style="position:absolute;left:176px;top:380.5px;width:1721px;height:22.5px;background:#a6a6a6;border-radius:0px;"></div>
<div style="position:absolute;left:176px;top:402.4px;width:1721px;height:0.6000000000000227px;background:#a0a0a0;border-radius:0px;"></div>
<div style="position:absolute;left:184.2px;top:385.55px;width:10.600000000000023px;height:10.399999999999977px;background:none;border:1px solid #8e8e8e;border-radius:1px;"></div>
<div style="position:absolute;left:85.30000000000001px;width:300px;text-align:center;top:387.05px;line-height:12px;font:8.8px 'Liberation Sans';color:#2a2a2a;white-space:nowrap;">141069</div>
<div style="position:absolute;left:140.39999999999998px;width:300px;text-align:center;top:387.05px;line-height:12px;font:8.8px 'Liberation Sans';color:#2a2a2a;white-space:nowrap;">4.0</div>
<div style="position:absolute;left:324.7px;top:387.05px;line-height:12px;font:8.8px 'Liberation Sans';color:#2a2a2a;white-space:nowrap;">Hotel Metropolitan Tokyo Ikebukuro</div>
<div style="position:absolute;left:581.6px;top:385.75px;width:118px;overflow:hidden;line-height:12px;font:8.6px 'Liberation Sans';color:#2a2a2a;white-space:nowrap"><span style="letter-spacing:0.14em">호텔</span> <span style="letter-spacing:0.14em">메트로폴리탄</span> <span style="letter-spacing:0.14em">도쿄</span> <span style="letter-spacing:0.14em">이케부쿠로</span></div>
<div style="position:absolute;left:892px;width:1000px;text-align:right;top:387.05px;line-height:12px;font:8.8px 'Liberation Sans';color:#2a2a2a;white-space:nowrap;">102911</div>
<div style="position:absolute;left:176px;top:403.0px;width:1721px;height:22.5px;background:#a6a6a6;border-radius:0px;"></div>
<div style="position:absolute;left:176px;top:424.9px;width:1721px;height:0.6000000000000227px;background:#a0a0a0;border-radius:0px;"></div>
<div style="position:absolute;left:184.2px;top:408.05px;width:10.600000000000023px;height:10.399999999999977px;background:none;border:1px solid #8e8e8e;border-radius:1px;"></div>
<div style="position:absolute;left:85.30000000000001px;width:300px;text-align:center;top:409.55px;line-height:12px;font:8.8px 'Liberation Sans';color:#2a2a2a;white-space:nowrap;">155719</div>
<div style="position:absolute;left:140.39999999999998px;width:300px;text-align:center;top:409.55px;line-height:12px;font:8.8px 'Liberation Sans';color:#2a2a2a;white-space:nowrap;">3.5</div>
<div style="position:absolute;left:324.7px;top:409.55px;line-height:12px;font:8.8px 'Liberation Sans';color:#2a2a2a;white-space:nowrap;">Hotel Monterey Hanzomon</div>
<div style="position:absolute;left:581.6px;top:408.25px;width:118px;overflow:hidden;line-height:12px;font:8.6px 'Liberation Sans';color:#2a2a2a;white-space:nowrap"><span style="letter-spacing:0.14em">호텔</span> <span style="letter-spacing:0.14em">몬토레</span> <span style="letter-spacing:0.14em">한조몬</span></div>
<div style="position:absolute;left:892px;width:1000px;text-align:right;top:409.55px;line-height:12px;font:8.8px 'Liberation Sans';color:#2a2a2a;white-space:nowrap;">102911</div>
<div style="position:absolute;left:176px;top:425.5px;width:1721px;height:22.5px;background:#a6a6a6;border-radius:0px;"></div>
<div style="position:absolute;left:176px;top:447.4px;width:1721px;height:0.6000000000000227px;background:#a0a0a0;border-radius:0px;"></div>
<div style="position:absolute;left:184.2px;top:430.55px;width:10.600000000000023px;height:10.399999999999977px;background:none;border:1px solid #8e8e8e;border-radius:1px;"></div>
<div style="position:absolute;left:85.30000000000001px;width:300px;text-align:center;top:432.05px;line-height:12px;font:8.8px 'Liberation Sans';color:#2a2a2a;white-space:nowrap;">158197</div>
<div style="position:absolute;left:140.39999999999998px;width:300px;text-align:center;top:432.05px;line-height:12px;font:8.8px 'Liberation Sans';color:#2a2a2a;white-space:nowrap;">3.0</div>
<div style="position:absolute;left:324.7px;top:432.05px;line-height:12px;font:8.8px 'Liberation Sans';color:#2a2a2a;white-space:nowrap;">Sotetsu Fresa Inn Ginza Nanachome</div>
<div style="position:absolute;left:581.6px;top:430.75px;width:118px;overflow:hidden;line-height:12px;font:8.6px 'Liberation Sans';color:#2a2a2a;white-space:nowrap"><span style="letter-spacing:0.14em">소테츠</span> <span style="letter-spacing:0.14em">프레사</span> <span style="letter-spacing:0.14em">인</span> <span style="letter-spacing:0.14em">긴자</span> <span style="letter-spacing:0.14em">나나초메</span></div>
<div style="position:absolute;left:892px;width:1000px;text-align:right;top:432.05px;line-height:12px;font:8.8px 'Liberation Sans';color:#2a2a2a;white-space:nowrap;">102911</div>
<div style="position:absolute;left:176px;top:448.0px;width:1721px;height:22.5px;background:#a6a6a6;border-radius:0px;"></div>
<div style="position:absolute;left:176px;top:469.9px;width:1721px;height:0.6000000000000227px;background:#a0a0a0;border-radius:0px;"></div>
<div style="position:absolute;left:184.2px;top:453.05px;width:10.600000000000023px;height:10.399999999999977px;background:none;border:1px solid #8e8e8e;border-radius:1px;"></div>
<div style="position:absolute;left:85.30000000000001px;width:300px;text-align:center;top:454.55px;line-height:12px;font:8.8px 'Liberation Sans';color:#2a2a2a;white-space:nowrap;">167121</div>
<div style="position:absolute;left:140.39999999999998px;width:300px;text-align:center;top:454.55px;line-height:12px;font:8.8px 'Liberation Sans';color:#2a2a2a;white-space:nowrap;">3.5</div>
<div style="position:absolute;left:324.7px;top:454.55px;line-height:12px;font:8.8px 'Liberation Sans';color:#2a2a2a;white-space:nowrap;">Hotel Monterey Akasaka</div>
<div style="position:absolute;left:581.6px;top:453.25px;width:118px;overflow:hidden;line-height:12px;font:8.6px 'Liberation Sans';color:#2a2a2a;white-space:nowrap"><span style="letter-spacing:0.14em">호텔</span> <span style="letter-spacing:0.14em">몬토레</span> <span style="letter-spacing:0.14em">아카사카</span></div>
<div style="position:absolute;left:892px;width:1000px;text-align:right;top:454.55px;line-height:12px;font:8.8px 'Liberation Sans';color:#2a2a2a;white-space:nowrap;">102911</div>
<div style="position:absolute;left:176px;top:470.5px;width:1721px;height:22.5px;background:#a6a6a6;border-radius:0px;"></div>
<div style="position:absolute;left:176px;top:492.4px;width:1721px;height:0.6000000000000227px;background:#a0a0a0;border-radius:0px;"></div>
<div style="position:absolute;left:184.2px;top:475.55px;width:10.600000000000023px;height:10.399999999999977px;background:none;border:1px solid #8e8e8e;border-radius:1px;"></div>
<div style="position:absolute;left:85.30000000000001px;width:300px;text-align:center;top:477.05px;line-height:12px;font:8.8px 'Liberation Sans';color:#2a2a2a;white-space:nowrap;">169327</div>
<div style="position:absolute;left:140.39999999999998px;width:300px;text-align:center;top:477.05px;line-height:12px;font:8.8px 'Liberation Sans';color:#2a2a2a;white-space:nowrap;">3.5</div>
<div style="position:absolute;left:324.7px;top:477.05px;line-height:12px;font:8.8px 'Liberation Sans';color:#2a2a2a;white-space:nowrap;">Hotel Monterey La Soeur Fukuoka</div>
<div style="position:absolute;left:581.6px;top:475.75px;width:118px;overflow:hidden;line-height:12px;font:8.6px 'Liberation Sans';color:#2a2a2a;white-space:nowrap"><span style="letter-spacing:0.14em">호텔</span> <span style="letter-spacing:0.14em">몬토레</span> <span style="letter-spacing:0.14em">라</span> <span style="letter-spacing:0.14em">수르</span> <span style="letter-spacing:0.14em">후쿠오카</span></div>
<div style="position:absolute;left:892px;width:1000px;text-align:right;top:477.05px;line-height:12px;font:8.8px 'Liberation Sans';color:#2a2a2a;white-space:nowrap;">294386</div>
<div style="position:absolute;left:176px;top:493.0px;width:1721px;height:22.5px;background:#a6a6a6;border-radius:0px;"></div>
<div style="position:absolute;left:176px;top:514.9px;width:1721px;height:0.6000000000000227px;background:#a0a0a0;border-radius:0px;"></div>
<div style="position:absolute;left:184.2px;top:498.05px;width:10.600000000000023px;height:10.399999999999977px;background:none;border:1px solid #8e8e8e;border-radius:1px;"></div>
<div style="position:absolute;left:85.30000000000001px;width:300px;text-align:center;top:499.55px;line-height:12px;font:8.8px 'Liberation Sans';color:#2a2a2a;white-space:nowrap;">170079</div>
<div style="position:absolute;left:140.39999999999998px;width:300px;text-align:center;top:499.55px;line-height:12px;font:8.8px 'Liberation Sans';color:#2a2a2a;white-space:nowrap;">4.0</div>
<div style="position:absolute;left:324.7px;top:499.55px;line-height:12px;font:8.8px 'Liberation Sans';color:#2a2a2a;white-space:nowrap;">Hotel Monterey Edelhof Sapporo</div>
<div style="position:absolute;left:581.6px;top:498.25px;width:118px;overflow:hidden;line-height:12px;font:8.6px 'Liberation Sans';color:#2a2a2a;white-space:nowrap"><span style="letter-spacing:0.14em">호텔</span> <span style="letter-spacing:0.14em">몬토레</span> <span style="letter-spacing:0.14em">에델호프</span> <span style="letter-spacing:0.14em">삿포로</span></div>
<div style="position:absolute;left:892px;width:1000px;text-align:right;top:499.55px;line-height:12px;font:8.8px 'Liberation Sans';color:#2a2a2a;white-space:nowrap;">102618</div>
<div style="position:absolute;left:176px;top:515.5px;width:1721px;height:22.5px;background:#a6a6a6;border-radius:0px;"></div>
<div style="position:absolute;left:176px;top:537.4px;width:1721px;height:0.6000000000000227px;background:#a0a0a0;border-radius:0px;"></div>
<div style="position:absolute;left:184.2px;top:520.55px;width:10.600000000000023px;height:10.400000000000091px;background:none;border:1px solid #8e8e8e;border-radius:1px;"></div>
<div style="position:absolute;left:85.30000000000001px;width:300px;text-align:center;top:522.05px;line-height:12px;font:8.8px 'Liberation Sans';color:#2a2a2a;white-space:nowrap;">177974</div>
<div style="position:absolute;left:140.39999999999998px;width:300px;text-align:center;top:522.05px;line-height:12px;font:8.8px 'Liberation Sans';color:#2a2a2a;white-space:nowrap;">3.5</div>
<div style="position:absolute;left:324.7px;top:522.05px;line-height:12px;font:8.8px 'Liberation Sans';color:#2a2a2a;white-space:nowrap;">Hotel Monterey La Soeur Ginza</div>
<div style="position:absolute;left:581.6px;top:520.75px;width:118px;overflow:hidden;line-height:12px;font:8.6px 'Liberation Sans';color:#2a2a2a;white-space:nowrap"><span style="letter-spacing:0.14em">호텔</span> <span style="letter-spacing:0.14em">몬토레</span> <span style="letter-spacing:0.14em">라</span> <span style="letter-spacing:0.14em">수르</span> <span style="letter-spacing:0.14em">긴자</span></div>
<div style="position:absolute;left:892px;width:1000px;text-align:right;top:522.05px;line-height:12px;font:8.8px 'Liberation Sans';color:#2a2a2a;white-space:nowrap;">102911</div>
<div style="position:absolute;left:176px;top:538.0px;width:1721px;height:22.5px;background:#a6a6a6;border-radius:0px;"></div>
<div style="position:absolute;left:176px;top:559.9px;width:1721px;height:0.6000000000000227px;background:#a0a0a0;border-radius:0px;"></div>
<div style="position:absolute;left:184.2px;top:543.05px;width:10.600000000000023px;height:10.400000000000091px;background:none;border:1px solid #8e8e8e;border-radius:1px;"></div>
<div style="position:absolute;left:85.30000000000001px;width:300px;text-align:center;top:544.55px;line-height:12px;font:8.8px 'Liberation Sans';color:#2a2a2a;white-space:nowrap;">181491</div>
<div style="position:absolute;left:140.39999999999998px;width:300px;text-align:center;top:544.55px;line-height:12px;font:8.8px 'Liberation Sans';color:#2a2a2a;white-space:nowrap;">3.0</div>
<div style="position:absolute;left:324.7px;top:544.55px;line-height:12px;font:8.8px 'Liberation Sans';color:#2a2a2a;white-space:nowrap;">Hotel Sunroute Plaza Shinjuku</div>
<div style="position:absolute;left:581.6px;top:543.25px;width:118px;overflow:hidden;line-height:12px;font:8.6px 'Liberation Sans';color:#2a2a2a;white-space:nowrap"><span style="letter-spacing:0.14em">호텔</span> <span style="letter-spacing:0.14em">썬루트</span> <span style="letter-spacing:0.14em">플라자</span> <span style="letter-spacing:0.14em">신주쿠</span></div>
<div style="position:absolute;left:892px;width:1000px;text-align:right;top:544.55px;line-height:12px;font:8.8px 'Liberation Sans';color:#2a2a2a;white-space:nowrap;">102911</div>
<div style="position:absolute;left:176px;top:560.5px;width:1721px;height:22.5px;background:#a6a6a6;border-radius:0px;"></div>
<div style="position:absolute;left:176px;top:582.4px;width:1721px;height:0.6000000000000227px;background:#a0a0a0;border-radius:0px;"></div>
<div style="position:absolute;left:184.2px;top:565.55px;width:10.600000000000023px;height:10.400000000000091px;background:none;border:1px solid #8e8e8e;border-radius:1px;"></div>
<div style="position:absolute;left:85.30000000000001px;width:300px;text-align:center;top:567.05px;line-height:12px;font:8.8px 'Liberation Sans';color:#2a2a2a;white-space:nowrap;">185928</div>
<div style="position:absolute;left:140.39999999999998px;width:300px;text-align:center;top:567.05px;line-height:12px;font:8.8px 'Liberation Sans';color:#2a2a2a;white-space:nowrap;">3.0</div>
<div style="position:absolute;left:324.7px;top:567.05px;line-height:12px;font:8.8px 'Liberation Sans';color:#2a2a2a;white-space:nowrap;">Toyoko Inn Osaka Hankyu Juso Station Nishi 1</div>
<div style="position:absolute;left:581.6px;top:565.75px;width:118px;overflow:hidden;line-height:12px;font:8.6px 'Liberation Sans';color:#2a2a2a;white-space:nowrap"><span style="letter-spacing:0.14em">토요코인</span> <span style="letter-spacing:0.14em">오사카</span> <span style="letter-spacing:0.14em">한큐</span> <span style="letter-spacing:0.14em">주소</span> <span style="letter-spacing:0.14em">스테이션</span></div>
<div style="position:absolute;left:892px;width:1000px;text-align:right;top:567.05px;line-height:12px;font:8.8px 'Liberation Sans';color:#2a2a2a;white-space:nowrap;">637451</div>
<div style="position:absolute;left:176px;top:583.0px;width:1721px;height:22.5px;background:#a6a6a6;border-radius:0px;"></div>
<div style="position:absolute;left:176px;top:604.9px;width:1721px;height:0.6000000000000227px;background:#a0a0a0;border-radius:0px;"></div>
<div style="position:absolute;left:184.2px;top:588.05px;width:10.600000000000023px;height:10.400000000000091px;background:none;border:1px solid #8e8e8e;border-radius:1px;"></div>
<div style="position:absolute;left:85.30000000000001px;width:300px;text-align:center;top:589.55px;line-height:12px;font:8.8px 'Liberation Sans';color:#2a2a2a;white-space:nowrap;">186024</div>
<div style="position:absolute;left:140.39999999999998px;width:300px;text-align:center;top:589.55px;line-height:12px;font:8.8px 'Liberation Sans';color:#2a2a2a;white-space:nowrap;">3.0</div>
<div style="position:absolute;left:324.7px;top:589.55px;line-height:12px;font:8.8px 'Liberation Sans';color:#2a2a2a;white-space:nowrap;">Toyoko Inn Osaka Shinsaibashi Nishi</div>
<div style="position:absolute;left:581.6px;top:588.25px;width:118px;overflow:hidden;line-height:12px;font:8.6px 'Liberation Sans';color:#2a2a2a;white-space:nowrap"><span style="letter-spacing:0.14em">토요코인</span> <span style="letter-spacing:0.14em">오사카</span> <span style="letter-spacing:0.14em">신사이바시</span> <span style="letter-spacing:0.14em">니시</span></div>
<div style="position:absolute;left:892px;width:1000px;text-align:right;top:589.55px;line-height:12px;font:8.8px 'Liberation Sans';color:#2a2a2a;white-space:nowrap;">637451</div>
<div style="position:absolute;left:176px;top:605.5px;width:1721px;height:22.5px;background:#a6a6a6;border-radius:0px;"></div>
<div style="position:absolute;left:176px;top:627.4px;width:1721px;height:0.6000000000000227px;background:#a0a0a0;border-radius:0px;"></div>
<div style="position:absolute;left:184.2px;top:610.55px;width:10.600000000000023px;height:10.400000000000091px;background:none;border:1px solid #8e8e8e;border-radius:1px;"></div>
<div style="position:absolute;left:85.30000000000001px;width:300px;text-align:center;top:612.05px;line-height:12px;font:8.8px 'Liberation Sans';color:#2a2a2a;white-space:nowrap;">202270</div>
<div style="position:absolute;left:140.39999999999998px;width:300px;text-align:center;top:612.05px;line-height:12px;font:8.8px 'Liberation Sans';color:#2a2a2a;white-space:nowrap;">3.0</div>
<div style="position:absolute;left:324.7px;top:612.05px;line-height:12px;font:8.8px 'Liberation Sans';color:#2a2a2a;white-space:nowrap;">Hotel Nets Sapporo</div>
<div style="position:absolute;left:581.6px;top:610.75px;width:118px;overflow:hidden;line-height:12px;font:8.6px 'Liberation Sans';color:#2a2a2a;white-space:nowrap"><span style="letter-spacing:0.14em">호텔</span> <span style="letter-spacing:0.14em">네츠</span> <span style="letter-spacing:0.14em">삿포로</span></div>
<div style="position:absolute;left:892px;width:1000px;text-align:right;top:612.05px;line-height:12px;font:8.8px 'Liberation Sans';color:#2a2a2a;white-space:nowrap;">102618</div>
<div style="position:absolute;left:176px;top:628.0px;width:1721px;height:22.5px;background:#a6a6a6;border-radius:0px;"></div>
<div style="position:absolute;left:176px;top:649.9px;width:1721px;height:0.6000000000000227px;background:#a0a0a0;border-radius:0px;"></div>
<div style="position:absolute;left:184.2px;top:633.05px;width:10.600000000000023px;height:10.400000000000091px;background:none;border:1px solid #8e8e8e;border-radius:1px;"></div>
<div style="position:absolute;left:85.30000000000001px;width:300px;text-align:center;top:634.55px;line-height:12px;font:8.8px 'Liberation Sans';color:#2a2a2a;white-space:nowrap;">208576</div>
<div style="position:absolute;left:140.39999999999998px;width:300px;text-align:center;top:634.55px;line-height:12px;font:8.8px 'Liberation Sans';color:#2a2a2a;white-space:nowrap;">3.0</div>
<div style="position:absolute;left:324.7px;top:634.55px;line-height:12px;font:8.8px 'Liberation Sans';color:#2a2a2a;white-space:nowrap;">Sotetsu Fresa Inn Ueno Okachimachi</div>
<div style="position:absolute;left:581.6px;top:633.25px;width:118px;overflow:hidden;line-height:12px;font:8.6px 'Liberation Sans';color:#2a2a2a;white-space:nowrap"><span style="letter-spacing:0.14em">소테츠</span> <span style="letter-spacing:0.14em">프레사</span> <span style="letter-spacing:0.14em">인</span> <span style="letter-spacing:0.14em">우에노</span> <span style="letter-spacing:0.14em">오카치마치</span></div>
<div style="position:absolute;left:892px;width:1000px;text-align:right;top:634.55px;line-height:12px;font:8.8px 'Liberation Sans';color:#2a2a2a;white-space:nowrap;">102911</div>
<div style="position:absolute;left:176px;top:650.5px;width:1721px;height:22.5px;background:#a6a6a6;border-radius:0px;"></div>
<div style="position:absolute;left:176px;top:672.4px;width:1721px;height:0.6000000000000227px;background:#a0a0a0;border-radius:0px;"></div>
<div style="position:absolute;left:184.2px;top:655.55px;width:10.600000000000023px;height:10.400000000000091px;background:none;border:1px solid #8e8e8e;border-radius:1px;"></div>
<div style="position:absolute;left:85.30000000000001px;width:300px;text-align:center;top:657.05px;line-height:12px;font:8.8px 'Liberation Sans';color:#2a2a2a;white-space:nowrap;">209291</div>
<div style="position:absolute;left:140.39999999999998px;width:300px;text-align:center;top:657.05px;line-height:12px;font:8.8px 'Liberation Sans';color:#2a2a2a;white-space:nowrap;">4.0</div>
<div style="position:absolute;left:324.7px;top:657.05px;line-height:12px;font:8.8px 'Liberation Sans';color:#2a2a2a;white-space:nowrap;">Shinagawa Prince Hotel</div>
<div style="position:absolute;left:581.6px;top:655.75px;width:118px;overflow:hidden;line-height:12px;font:8.6px 'Liberation Sans';color:#2a2a2a;white-space:nowrap"><span style="letter-spacing:0.14em">시나가와</span> <span style="letter-spacing:0.14em">프린스</span> <span style="letter-spacing:0.14em">호텔</span></div>
<div style="position:absolute;left:892px;width:1000px;text-align:right;top:657.05px;line-height:12px;font:8.8px 'Liberation Sans';color:#2a2a2a;white-space:nowrap;">102911</div>
<div style="position:absolute;left:176px;top:673.0px;width:1721px;height:22.5px;background:#a6a6a6;border-radius:0px;"></div>
<div style="position:absolute;left:176px;top:694.9px;width:1721px;height:0.6000000000000227px;background:#a0a0a0;border-radius:0px;"></div>
<div style="position:absolute;left:184.2px;top:678.05px;width:10.600000000000023px;height:10.400000000000091px;background:none;border:1px solid #8e8e8e;border-radius:1px;"></div>
<div style="position:absolute;left:85.30000000000001px;width:300px;text-align:center;top:679.55px;line-height:12px;font:8.8px 'Liberation Sans';color:#2a2a2a;white-space:nowrap;">214867</div>
<div style="position:absolute;left:140.39999999999998px;width:300px;text-align:center;top:679.55px;line-height:12px;font:8.8px 'Liberation Sans';color:#2a2a2a;white-space:nowrap;">3.0</div>
<div style="position:absolute;left:324.7px;top:679.55px;line-height:12px;font:8.8px 'Liberation Sans';color:#2a2a2a;white-space:nowrap;">Daiwa Roynet Hotel Yotsubashi</div>
<div style="position:absolute;left:581.6px;top:678.25px;width:118px;overflow:hidden;line-height:12px;font:8.6px 'Liberation Sans';color:#2a2a2a;white-space:nowrap"><span style="letter-spacing:0.14em">다이와</span> <span style="letter-spacing:0.14em">로이넷</span> <span style="letter-spacing:0.14em">호텔</span> <span style="letter-spacing:0.14em">요츠바시</span></div>
<div style="position:absolute;left:892px;width:1000px;text-align:right;top:679.55px;line-height:12px;font:8.8px 'Liberation Sans';color:#2a2a2a;white-space:nowrap;">637451</div>
<div style="position:absolute;left:176px;top:695.5px;width:1721px;height:22.5px;background:#a6a6a6;border-radius:0px;"></div>
<div style="position:absolute;left:176px;top:717.4px;width:1721px;height:0.6000000000000227px;background:#a0a0a0;border-radius:0px;"></div>
<div style="position:absolute;left:184.2px;top:700.55px;width:10.600000000000023px;height:10.400000000000091px;background:none;border:1px solid #8e8e8e;border-radius:1px;"></div>
<div style="position:absolute;left:85.30000000000001px;width:300px;text-align:center;top:702.05px;line-height:12px;font:8.8px 'Liberation Sans';color:#2a2a2a;white-space:nowrap;">221292</div>
<div style="position:absolute;left:140.39999999999998px;width:300px;text-align:center;top:702.05px;line-height:12px;font:8.8px 'Liberation Sans';color:#2a2a2a;white-space:nowrap;">3.0</div>
<div style="position:absolute;left:324.7px;top:702.05px;line-height:12px;font:8.8px 'Liberation Sans';color:#2a2a2a;white-space:nowrap;">Sotetsu Fresa Inn Tokyo Kinshicho</div>
<div style="position:absolute;left:581.6px;top:700.75px;width:118px;overflow:hidden;line-height:12px;font:8.6px 'Liberation Sans';color:#2a2a2a;white-space:nowrap"><span style="letter-spacing:0.14em">소테츠</span> <span style="letter-spacing:0.14em">프레사</span> <span style="letter-spacing:0.14em">인</span> <span style="letter-spacing:0.14em">도쿄</span> <span style="letter-spacing:0.14em">긴시초</span></div>
<div style="position:absolute;left:892px;width:1000px;text-align:right;top:702.05px;line-height:12px;font:8.8px 'Liberation Sans';color:#2a2a2a;white-space:nowrap;">102911</div>
<div style="position:absolute;left:176px;top:718.0px;width:1721px;height:22.5px;background:#a6a6a6;border-radius:0px;"></div>
<div style="position:absolute;left:176px;top:739.9px;width:1721px;height:0.6000000000000227px;background:#a0a0a0;border-radius:0px;"></div>
<div style="position:absolute;left:184.2px;top:723.05px;width:10.600000000000023px;height:10.400000000000091px;background:none;border:1px solid #8e8e8e;border-radius:1px;"></div>
<div style="position:absolute;left:85.30000000000001px;width:300px;text-align:center;top:724.55px;line-height:12px;font:8.8px 'Liberation Sans';color:#2a2a2a;white-space:nowrap;">227348</div>
<div style="position:absolute;left:140.39999999999998px;width:300px;text-align:center;top:724.55px;line-height:12px;font:8.8px 'Liberation Sans';color:#2a2a2a;white-space:nowrap;">3.0</div>
<div style="position:absolute;left:324.7px;top:724.55px;line-height:12px;font:8.8px 'Liberation Sans';color:#2a2a2a;white-space:nowrap;">Hotel IL FIORE Kasai</div>
<div style="position:absolute;left:581.6px;top:723.25px;width:118px;overflow:hidden;line-height:12px;font:8.6px 'Liberation Sans';color:#2a2a2a;white-space:nowrap"><span style="letter-spacing:0.14em">호텔</span> <span style="letter-spacing:0.14em">일</span> <span style="letter-spacing:0.14em">피오레</span> <span style="letter-spacing:0.14em">카사이</span></div>
<div style="position:absolute;left:892px;width:1000px;text-align:right;top:724.55px;line-height:12px;font:8.8px 'Liberation Sans';color:#2a2a2a;white-space:nowrap;">102911</div>
<div style="position:absolute;left:176px;top:740.5px;width:1721px;height:22.5px;background:#a6a6a6;border-radius:0px;"></div>
<div style="position:absolute;left:176px;top:762.4px;width:1721px;height:0.6000000000000227px;background:#a0a0a0;border-radius:0px;"></div>
<div style="position:absolute;left:184.2px;top:745.55px;width:10.600000000000023px;height:10.400000000000091px;background:none;border:1px solid #8e8e8e;border-radius:1px;"></div>
<div style="position:absolute;left:85.30000000000001px;width:300px;text-align:center;top:747.05px;line-height:12px;font:8.8px 'Liberation Sans';color:#2a2a2a;white-space:nowrap;">245922</div>
<div style="position:absolute;left:140.39999999999998px;width:300px;text-align:center;top:747.05px;line-height:12px;font:8.8px 'Liberation Sans';color:#2a2a2a;white-space:nowrap;">3.0</div>
<div style="position:absolute;left:324.7px;top:747.05px;line-height:12px;font:8.8px 'Liberation Sans';color:#2a2a2a;white-space:nowrap;">La'gent Hotel Okinawa Chatan - Hostel</div>
<div style="position:absolute;left:581.6px;top:745.75px;width:118px;overflow:hidden;line-height:12px;font:8.6px 'Liberation Sans';color:#2a2a2a;white-space:nowrap"><span style="letter-spacing:0.14em">라젠트</span> <span style="letter-spacing:0.14em">호텔</span> <span style="letter-spacing:0.14em">오키나와</span> <span style="letter-spacing:0.14em">차탄</span> - <span style="letter-spacing:0.14em">호스텔</span></div>
<div style="position:absolute;left:892px;width:1000px;text-align:right;top:747.05px;line-height:12px;font:8.8px 'Liberation Sans';color:#2a2a2a;white-space:nowrap;">186676</div>
<div style="position:absolute;left:176px;top:763.0px;width:1721px;height:22.5px;background:#a6a6a6;border-radius:0px;"></div>
<div style="position:absolute;left:176px;top:784.9px;width:1721px;height:0.6000000000000227px;background:#a0a0a0;border-radius:0px;"></div>
<div style="position:absolute;left:184.2px;top:768.05px;width:10.600000000000023px;height:10.400000000000091px;background:none;border:1px solid #8e8e8e;border-radius:1px;"></div>
<div style="position:absolute;left:85.30000000000001px;width:300px;text-align:center;top:769.55px;line-height:12px;font:8.8px 'Liberation Sans';color:#2a2a2a;white-space:nowrap;">252838</div>
<div style="position:absolute;left:140.39999999999998px;width:300px;text-align:center;top:769.55px;line-height:12px;font:8.8px 'Liberation Sans';color:#2a2a2a;white-space:nowrap;">4.0</div>
<div style="position:absolute;left:324.7px;top:769.55px;line-height:12px;font:8.8px 'Liberation Sans';color:#2a2a2a;white-space:nowrap;">ANA Crowne Plaza Sapporo, an IHG Hotel</div>
<div style="position:absolute;left:581.6px;top:768.25px;width:118px;overflow:hidden;line-height:12px;font:8.6px 'Liberation Sans';color:#2a2a2a;white-space:nowrap">ANA <span style="letter-spacing:0.14em">크라운</span> <span style="letter-spacing:0.14em">플라자</span> <span style="letter-spacing:0.14em">삿포로</span>, IHG <span style="letter-spacing:0.14em">호텔</span></div>
<div style="position:absolute;left:892px;width:1000px;text-align:right;top:769.55px;line-height:12px;font:8.8px 'Liberation Sans';color:#2a2a2a;white-space:nowrap;">102618</div>
<div style="position:absolute;left:184.2px;top:317px;width:10.600000000000023px;height:10.600000000000023px;background:none;border:1px solid #8e8e8e;border-radius:1px;"></div>
<div style="position:absolute;left:85.30000000000001px;width:300px;text-align:center;top:318.8px;line-height:12px;font:9.3px 'Liberation Sans';color:#161616;white-space:nowrap;font-weight:bold;">Code</div>
<div style="position:absolute;left:140.39999999999998px;width:300px;text-align:center;top:318.8px;line-height:12px;font:9.3px 'Liberation Sans';color:#161616;white-space:nowrap;font-weight:bold;">Grade</div>
<div style="position:absolute;left:295.4px;width:300px;text-align:center;top:318.8px;line-height:12px;font:9.3px 'Liberation Sans';color:#161616;white-space:nowrap;font-weight:bold;">Hotel Name(EN)</div>
<div style="position:absolute;left:526.5px;width:300px;text-align:center;top:318.8px;line-height:12px;font:9.3px 'Liberation Sans';color:#161616;white-space:nowrap;font-weight:bold;">Hotel Name(KO)</div>
<div style="position:absolute;left:822px;width:1000px;text-align:right;top:318.8px;line-height:12px;font:bold 9.3px 'Liberation Sans';color:#161616;white-space:nowrap;">Hotel Name</div>
<div style="position:absolute;left:1848px;top:318.8px;line-height:12px;font:bold 9.3px 'Liberation Sans';color:#161616;white-space:nowrap;width:49px;overflow:hidden;">Region Code</div>
<div style="position:absolute;left:206.2px;top:312px;width:0.8000000000000114px;height:473.5px;background:#999999;border-radius:0px;"></div>
<div style="position:absolute;left:264.4px;top:312px;width:0.8000000000000114px;height:473.5px;background:#999999;border-radius:0px;"></div>
<div style="position:absolute;left:316.4px;top:312px;width:0.8000000000000114px;height:473.5px;background:#999999;border-radius:0px;"></div>
<div style="position:absolute;left:574.2px;top:312px;width:0.7999999999999545px;height:473.5px;background:#999999;border-radius:0px;"></div>
<div style="position:absolute;left:1834.5px;top:312px;width:0.7999999999999545px;height:473.5px;background:#999999;border-radius:0px;"></div>
<div style="position:absolute;left:176px;top:785.5px;width:1721px;height:15.5px;background:#a6a6a6;border-radius:0px;"></div>
<svg style="position:absolute;left:178px;top:788px" width="12" height="12"><path d="M2 5.5 L8.5 1.5 V9.5 Z" fill="#444"/></svg>
<div style="position:absolute;left:193.8px;top:789px;width:1596.2px;height:8.5px;background:#555555;border-radius:4.5px;"></div>
<svg style="position:absolute;left:1884px;top:788px" width="12" height="12"><path d="M9.5 5.5 L3 1.5 V9.5 Z" fill="#555"/></svg>
<div style="position:absolute;left:176px;top:801px;width:1721px;height:1.2000000000000455px;background:#4f4f4f;border-radius:0px;"></div>
<div style="position:absolute;left:176px;top:802.2px;width:1721px;height:33.799999999999955px;background:#a0a0a0;border-radius:0px;"></div>
<div style="position:absolute;left:176px;top:835.8px;width:1721px;height:1.2000000000000455px;background:#4f4f4f;border-radius:0px;"></div>
<svg style="position:absolute;left:186px;top:812px" width="170" height="14"><g fill="#222"><rect x="3" y="3" width="1.3" height="7"/><path d="M10 3 L5 6.5 L10 10 Z"/><path d="M31 3.5 L26.5 6.5 L31 9.5 Z"/><path d="M133 3.5 L137.5 6.5 L133 9.5 Z"/><path d="M153 3 L158 6.5 L153 10 Z"/><rect x="158.2" y="3" width="1.3" height="7"/></g></svg>
<div style="position:absolute;left:225px;top:808px;width:21px;height:22px;background:#c59a9c;border-radius:0px;"></div>
<div style="position:absolute;left:85.5px;width:300px;text-align:center;top:813.9px;line-height:12px;font:9.3px 'Liberation Sans';color:#b83a3e;white-space:nowrap;">1</div>
<div style="position:absolute;left:106.80000000000001px;width:300px;text-align:center;top:813.9px;line-height:12px;font:9.3px 'Liberation Sans';color:#b83a3e;white-space:nowrap;">2</div>
<div style="position:absolute;left:128px;width:300px;text-align:center;top:813.9px;line-height:12px;font:9.3px 'Liberation Sans';color:#b83a3e;white-space:nowrap;">3</div>
<div style="position:absolute;left:149.3px;width:300px;text-align:center;top:813.9px;line-height:12px;font:9.3px 'Liberation Sans';color:#b83a3e;white-space:nowrap;">4</div>
<div style="position:absolute;left:881.5px;width:1000px;text-align:right;top:814.3px;line-height:12px;font:9.8px 'Liberation Sans';color:#151515;white-space:nowrap;">1 - 20 of 75 items</div>
<div style="position:absolute;left:1760px;top:844.4px;width:65px;height:15.600000000000023px;background:#a6a6a6;border:1px solid #6e6e6e;border-radius:2px;"></div>
<div style="position:absolute;left:1790px;top:848.3px;line-height:12px;font:9.5px 'Liberation Sans';color:#1e1e1e;white-space:nowrap;">Save</div>
<div style="position:absolute;left:1831px;top:844.4px;width:64px;height:15.600000000000023px;background:#a6a6a6;border:1px solid #6e6e6e;border-radius:2px;"></div>
<div style="position:absolute;left:1714px;width:300px;text-align:center;top:848.3px;line-height:12px;font:9.5px 'Liberation Sans';color:#1e1e1e;white-space:nowrap;">Grid Reset</div>
</div>
<div style="position:absolute;left:0;top:0;width:1810px;height:931px;overflow:hidden">
<div style="position:absolute;left:700px;top:203px;width:1110px;height:33px;background:#444444;border-radius:0px;"></div>
<div style="position:absolute;left:715.2px;top:213.70000000000002px;line-height:12px;font:bold 10.3px 'Liberation Sans';color:#ffffff;white-space:nowrap;">Hotel Master</div>
<svg style="position:absolute;left:1781px;top:213px" width="13" height="13"><path d="M1.5 1.5 L11.5 11.5 M11.5 1.5 L1.5 11.5" stroke="#fff" stroke-width="1.5"/></svg>
<div style="position:absolute;left:700px;top:236px;width:1110px;height:70.5px;background:#ffffff;border-radius:0px;"></div>
<div style="position:absolute;left:716.6px;top:253.90000000000003px;line-height:12px;font:bold 12px 'Liberation Sans';color:#111;white-space:nowrap;">[130959] Sotetsu Grand Fresa Osaka - Namba (<span style="letter-spacing:0.14em">소테츠</span> <span style="letter-spacing:0.14em">그랜드</span> <span style="letter-spacing:0.14em">프레사</span> <span style="letter-spacing:0.14em">오사카</span> - <span style="letter-spacing:0.14em">난바</span>)<svg style="margin-left:4px;vertical-align:-1px" width="42" height="11"><path transform="translate(0,0.5)" d="M5 0.3 L6.3 3.6 L9.8 3.8 L7.1 6 L8 9.5 L5 7.6 L2 9.5 L2.9 6 L0.2 3.8 L3.7 3.6 Z" fill="#f5b800"/><path transform="translate(11,0.5)" d="M5 0.3 L6.3 3.6 L9.8 3.8 L7.1 6 L8 9.5 L5 7.6 L2 9.5 L2.9 6 L0.2 3.8 L3.7 3.6 Z" fill="#f5b800"/><path transform="translate(22,0.5)" d="M5 0.3 L6.3 3.6 L9.8 3.8 L7.1 6 L8 9.5 L5 7.6 L2 9.5 L2.9 6 L0.2 3.8 L3.7 3.6 Z" fill="#f5b800"/><path transform="translate(33,0.5)" d="M5 0.3 L5 7.6 L2 9.5 L2.9 6 L0.2 3.8 L3.7 3.6 Z" fill="#f5b800"/></svg></div>
<div style="position:absolute;left:794px;width:1000px;text-align:right;top:278.8px;line-height:12px;font:10.1px 'Liberation Sans';color:#555;white-space:nowrap;">First Insert Date : 2023-04-04 10:17:22 <span style="color:#ccc">|</span> Last Update Date : 2025-06-17 09:45:33</div>
<div style="position:absolute;left:700px;top:306px;width:1110px;height:1px;background:#e6e6e6;border-radius:0px;"></div>
<div style="position:absolute;left:700px;top:307px;width:1110px;height:31.5px;background:#f8f7fa;border-radius:0px;"></div>
<div style="position:absolute;left:700px;top:338px;width:1110px;height:1px;background:#e2e2e2;border-radius:0px;"></div>
<div style="position:absolute;left:724px;top:315px;width:51.39999999999998px;height:23px;background:#fff;border:1px solid #dcdcdc;border-radius:2px;border-bottom:none;"></div>
<div style="position:absolute;left:600.7px;width:300px;text-align:center;top:322.3px;line-height:12px;font:9.3px 'Liberation Sans';color:#1a1a1a;white-space:nowrap;">Basic</div>
<div style="position:absolute;left:782.4px;top:315px;width:75.10000000000002px;height:21.5px;background:#f8f7fa;border:1px solid #dcdcdc;border-radius:2px;border-bottom:none;"></div>
<div style="position:absolute;left:670.95px;width:300px;text-align:center;top:322.3px;line-height:12px;font:9.3px 'Liberation Sans';color:#888;white-space:nowrap;">Description</div>
<div style="position:absolute;left:864.3px;top:315px;width:52.200000000000045px;height:21.5px;background:#f8f7fa;border:1px solid #dcdcdc;border-radius:2px;border-bottom:none;"></div>
<div style="position:absolute;left:741.4px;width:300px;text-align:center;top:322.3px;line-height:12px;font:9.3px 'Liberation Sans';color:#888;white-space:nowrap;">Photo</div>
<div style="position:absolute;left:923.2px;top:315px;width:89.19999999999993px;height:21.5px;background:#f8f7fa;border:1px solid #dcdcdc;border-radius:2px;border-bottom:none;"></div>
<div style="position:absolute;left:818.8px;width:300px;text-align:center;top:322.3px;line-height:12px;font:9.3px 'Liberation Sans';color:#888;white-space:nowrap;">V.Mapping List</div>
<div style="position:absolute;left:1019.3px;top:315px;width:77.0px;height:21.5px;background:#f8f7fa;border:1px solid #dcdcdc;border-radius:2px;border-bottom:none;"></div>
<div style="position:absolute;left:908.8px;width:300px;text-align:center;top:322.3px;line-height:12px;font:9.3px 'Liberation Sans';color:#888;white-space:nowrap;">Region Lists</div>
<div style="position:absolute;left:700px;top:339px;width:1106px;height:592px;background:#ffffff;border-radius:0px;"></div>
<div style="position:absolute;left:1806px;top:339px;width:4px;height:499px;background:#989898;border-radius:0px;"></div>
<div style="position:absolute;left:1806px;top:838px;width:4px;height:93px;background:#e2e2e2;border-radius:0px;"></div>
<div style="position:absolute;left:719px;top:352.6px;width:1069px;height:1.7999999999999545px;background:#666;border-radius:0px;"></div>
<div style="position:absolute;left:719px;top:354px;width:160.39999999999998px;height:27.600000000000023px;background:#f1f1f1;border-radius:0px;"></div>
<div style="position:absolute;left:719px;top:381.1px;width:534.4000000000001px;height:1.0px;background:#dedede;border-radius:0px;"></div>
<div style="position:absolute;left:719px;top:382.1px;width:160.39999999999998px;height:25.799999999999955px;background:#f1f1f1;border-radius:0px;"></div>
<div style="position:absolute;left:719px;top:407.4px;width:534.4000000000001px;height:1.0px;background:#dedede;border-radius:0px;"></div>
<div style="position:absolute;left:719px;top:408.4px;width:160.39999999999998px;height:26.200000000000045px;background:#f1f1f1;border-radius:0px;"></div>
<div style="position:absolute;left:719px;top:434.1px;width:534.4000000000001px;height:1.0px;background:#dedede;border-radius:0px;"></div>
<div style="position:absolute;left:719px;top:435.1px;width:160.39999999999998px;height:25.5px;background:#f1f1f1;border-radius:0px;"></div>
<div style="position:absolute;left:719px;top:460.1px;width:534.4000000000001px;height:1.0px;background:#dedede;border-radius:0px;"></div>
<div style="position:absolute;left:719px;top:461.1px;width:160.39999999999998px;height:26.599999999999966px;background:#f1f1f1;border-radius:0px;"></div>
<div style="position:absolute;left:719px;top:487.2px;width:534.4000000000001px;height:1.0px;background:#dedede;border-radius:0px;"></div>
<div style="position:absolute;left:719px;top:488.2px;width:160.39999999999998px;height:25.500000000000057px;background:#f1f1f1;border-radius:0px;"></div>
<div style="position:absolute;left:719px;top:513.2px;width:534.4000000000001px;height:1.0px;background:#dedede;border-radius:0px;"></div>
<div style="position:absolute;left:719px;top:514.2px;width:160.39999999999998px;height:26.199999999999932px;background:#f1f1f1;border-radius:0px;"></div>
<div style="position:absolute;left:719px;top:539.9px;width:534.4000000000001px;height:1.0px;background:#dedede;border-radius:0px;"></div>
<div style="position:absolute;left:719px;top:540.9px;width:160.39999999999998px;height:25.800000000000068px;background:#f1f1f1;border-radius:0px;"></div>
<div style="position:absolute;left:719px;top:566.2px;width:534.4000000000001px;height:1.0px;background:#dedede;border-radius:0px;"></div>
<div style="position:absolute;left:719px;top:567.2px;width:160.39999999999998px;height:26.59999999999991px;background:#f1f1f1;border-radius:0px;"></div>
<div style="position:absolute;left:719px;top:593.3px;width:534.4000000000001px;height:1.0px;background:#dedede;border-radius:0px;"></div>
<div style="position:absolute;left:719px;top:594.3px;width:160.39999999999998px;height:25.5px;background:#f1f1f1;border-radius:0px;"></div>
<div style="position:absolute;left:719px;top:619.3px;width:534.4000000000001px;height:1.0px;background:#dedede;border-radius:0px;"></div>
<div style="position:absolute;left:719px;top:620.3px;width:160.39999999999998px;height:26.600000000000023px;background:#f1f1f1;border-radius:0px;"></div>
<div style="position:absolute;left:719px;top:646.4px;width:534.4000000000001px;height:1.0px;background:#dedede;border-radius:0px;"></div>
<div style="position:absolute;left:719px;top:647.4px;width:160.39999999999998px;height:25.399999999999977px;background:#f1f1f1;border-radius:0px;"></div>
<div style="position:absolute;left:719px;top:672.3px;width:534.4000000000001px;height:1.0px;background:#dedede;border-radius:0px;"></div>
<div style="position:absolute;left:719px;top:673.3px;width:160.39999999999998px;height:25.90000000000009px;background:#f1f1f1;border-radius:0px;"></div>
<div style="position:absolute;left:719px;top:698.7px;width:534.4000000000001px;height:1.0px;background:#dedede;border-radius:0px;"></div>
<div style="position:absolute;left:719px;top:699.7px;width:160.39999999999998px;height:25.799999999999955px;background:#f1f1f1;border-radius:0px;"></div>
<div style="position:absolute;left:719px;top:725.0px;width:534.4000000000001px;height:1.0px;background:#dedede;border-radius:0px;"></div>
<div style="position:absolute;left:719px;top:726.0px;width:160.39999999999998px;height:26.600000000000023px;background:#f1f1f1;border-radius:0px;"></div>
<div style="position:absolute;left:719px;top:752.1px;width:534.4000000000001px;height:1.0px;background:#dedede;border-radius:0px;"></div>
<div style="position:absolute;left:719px;top:753.1px;width:160.39999999999998px;height:25.199999999999932px;background:#f1f1f1;border-radius:0px;"></div>
<div style="position:absolute;left:719px;top:777.8px;width:534.4000000000001px;height:1.0px;background:#dedede;border-radius:0px;"></div>
<div style="position:absolute;left:719px;top:778.8px;width:160.39999999999998px;height:23.700000000000045px;background:#f1f1f1;border-radius:0px;"></div>
<div style="position:absolute;left:719px;top:802.0px;width:534.4000000000001px;height:1.0px;background:#dedede;border-radius:0px;"></div>
<div style="position:absolute;left:719px;top:803.0px;width:160.39999999999998px;height:25.5px;background:#f1f1f1;border-radius:0px;"></div>
<div style="position:absolute;left:719px;top:828.0px;width:534.4000000000001px;height:1.0px;background:#dedede;border-radius:0px;"></div>
<div style="position:absolute;left:719px;top:829.0px;width:160.39999999999998px;height:26.299999999999955px;background:#f1f1f1;border-radius:0px;"></div>
<div style="position:absolute;left:719px;top:854.8px;width:534.4000000000001px;height:1.0px;background:#dedede;border-radius:0px;"></div>
<div style="position:absolute;left:719px;top:855.8px;width:160.39999999999998px;height:25.800000000000068px;background:#f1f1f1;border-radius:0px;"></div>
<div style="position:absolute;left:719px;top:881.1px;width:534.4000000000001px;height:1.0px;background:#dedede;border-radius:0px;"></div>
<div style="position:absolute;left:719px;top:882.1px;width:160.39999999999998px;height:23.100000000000023px;background:#f1f1f1;border-radius:0px;"></div>
<div style="position:absolute;left:719px;top:904.7px;width:534.4000000000001px;height:1.0px;background:#dedede;border-radius:0px;"></div>
<div style="position:absolute;left:719px;top:905.7px;width:160.39999999999998px;height:34.299999999999955px;background:#f1f1f1;border-radius:0px;"></div>
<div style="position:absolute;left:879.4px;top:354px;width:1.0px;height:586px;background:#e0e0e0;border-radius:0px;"></div>
<div style="position:absolute;left:1252.9px;top:354px;width:1.0px;height:551.2px;background:#e0e0e0;border-radius:0px;"></div>
<div style="position:absolute;left:726.3px;top:361.90000000000003px;line-height:12px;font:9.4px 'Liberation Sans';color:#1f1f1f;white-space:nowrap;-webkit-text-stroke:0.25px;">Hotel Code<span style="color:#e8242a;position:relative;top:-1px"> *</span></div>
<div style="position:absolute;left:726.3px;top:388.85px;line-height:12px;font:9.4px 'Liberation Sans';color:#1f1f1f;white-space:nowrap;-webkit-text-stroke:0.25px;">Country <span style="color:#e8242a;position:relative;top:-1px"> *</span>/Region<span style="color:#e8242a;position:relative;top:-1px"> *</span></div>
<div style="position:absolute;left:726.3px;top:415.35px;line-height:12px;font:9.4px 'Liberation Sans';color:#1f1f1f;white-space:nowrap;-webkit-text-stroke:0.25px;">Hotel Name(EN)<span style="color:#e8242a;position:relative;top:-1px"> *</span></div>
<div style="position:absolute;left:726.3px;top:441.70000000000005px;line-height:12px;font:9.4px 'Liberation Sans';color:#1f1f1f;white-space:nowrap;-webkit-text-stroke:0.25px;">Hotel Name(KO)<span style="color:#e8242a;position:relative;top:-1px"> *</span></div>
<div style="position:absolute;left:726.3px;top:468.25px;line-height:12px;font:9.4px 'Liberation Sans';color:#1f1f1f;white-space:nowrap;-webkit-text-stroke:0.25px;">Hotel Name(JA)</div>
<div style="position:absolute;left:726.3px;top:494.80000000000007px;line-height:12px;font:9.4px 'Liberation Sans';color:#1f1f1f;white-space:nowrap;-webkit-text-stroke:0.25px;">Hotel Name(VI)</div>
<div style="position:absolute;left:726.3px;top:521.1499999999999px;line-height:12px;font:9.4px 'Liberation Sans';color:#1f1f1f;white-space:nowrap;-webkit-text-stroke:0.25px;">Hotel Name(ZH)</div>
<div style="position:absolute;left:726.3px;top:547.6499999999999px;line-height:12px;font:9.4px 'Liberation Sans';color:#1f1f1f;white-space:nowrap;-webkit-text-stroke:0.25px;">Address(EN)</div>
<div style="position:absolute;left:726.3px;top:574.3499999999999px;line-height:12px;font:9.4px 'Liberation Sans';color:#1f1f1f;white-space:nowrap;-webkit-text-stroke:0.25px;">Address(KO)</div>
<div style="position:absolute;left:726.3px;top:600.8999999999999px;line-height:12px;font:9.4px 'Liberation Sans';color:#1f1f1f;white-space:nowrap;-webkit-text-stroke:0.25px;">Address(JA)</div>
<div style="position:absolute;left:726.3px;top:627.4499999999998px;line-height:12px;font:9.4px 'Liberation Sans';color:#1f1f1f;white-space:nowrap;-webkit-text-stroke:0.25px;">Address(VI)</div>
<div style="position:absolute;left:726.3px;top:653.9499999999998px;line-height:12px;font:9.4px 'Liberation Sans';color:#1f1f1f;white-space:nowrap;-webkit-text-stroke:0.25px;">Address(ZH)</div>
<div style="position:absolute;left:726.3px;top:680.0999999999999px;line-height:12px;font:9.4px 'Liberation Sans';color:#1f1f1f;white-space:nowrap;-webkit-text-stroke:0.25px;">Zip Code</div>
<div style="position:absolute;left:726.3px;top:706.4499999999999px;line-height:12px;font:9.4px 'Liberation Sans';color:#1f1f1f;white-space:nowrap;-webkit-text-stroke:0.25px;">Email / Homepage URL</div>
<div style="position:absolute;left:726.3px;top:733.1499999999999px;line-height:12px;font:9.4px 'Liberation Sans';color:#1f1f1f;white-space:nowrap;-webkit-text-stroke:0.25px;">Renovated Date</div>
<div style="position:absolute;left:726.3px;top:759.55px;line-height:12px;font:9.4px 'Liberation Sans';color:#1f1f1f;white-space:nowrap;-webkit-text-stroke:0.25px;">Established Date</div>
<div style="position:absolute;left:726.3px;top:784.4999999999999px;line-height:12px;font:9.4px 'Liberation Sans';color:#1f1f1f;white-space:nowrap;-webkit-text-stroke:0.25px;">Recommed<span style="color:#e8242a;position:relative;top:-1px"> *</span></div>
<div style="position:absolute;left:726.3px;top:809.5999999999999px;line-height:12px;font:9.4px 'Liberation Sans';color:#1f1f1f;white-space:nowrap;-webkit-text-stroke:0.25px;">Ranking Order<span style="color:#e8242a;position:relative;top:-1px"> *</span></div>
<div style="position:absolute;left:726.3px;top:835.9999999999999px;line-height:12px;font:9.4px 'Liberation Sans';color:#1f1f1f;white-space:nowrap;-webkit-text-stroke:0.25px;">Vendor Comp</div>
<div style="position:absolute;left:726.3px;top:862.55px;line-height:12px;font:9.4px 'Liberation Sans';color:#1f1f1f;white-space:nowrap;-webkit-text-stroke:0.25px;">Vendor Hotel Code</div>
<div style="position:absolute;left:726.3px;top:887.5px;line-height:12px;font:9.4px 'Liberation Sans';color:#1f1f1f;white-space:nowrap;-webkit-text-stroke:0.25px;">Update Prohibit<span style="color:#e8242a;position:relative;top:-1px"> *</span></div>
<div style="position:absolute;left:726.3px;top:921.5999999999999px;line-height:12px;font:9.4px 'Liberation Sans';color:#1f1f1f;white-space:nowrap;-webkit-text-stroke:0.25px;">Hotel Name Search<span style="color:#e8242a;position:relative;top:-1px"> *</span></div>
<div style="position:absolute;left:887px;top:358.20000000000005px;width:356px;height:16.599999999999966px;background:#f0f0f0;border:1px solid #d9d9d9;border-radius:3px;"></div><div style="position:absolute;left:896.5px;top:363.70000000000005px;line-height:12px;font:9px 'Liberation Sans';color:#777;white-space:nowrap;">130959</div>
<div style="position:absolute;left:887px;top:385.15000000000003px;width:169.4000000000001px;height:16.599999999999966px;background:#fff;border:1px solid #d9d9d9;border-radius:3px;"></div><svg style="position:absolute;left:898px;top:389.35px" width="12" height="12"><circle cx="5.6" cy="5.6" r="3.6" fill="none" stroke="#888" stroke-width="1"/><path d="M8.2 8.2 L10 10" stroke="#888" stroke-width="1"/></svg><div style="position:absolute;left:917.7px;top:390.65000000000003px;line-height:12px;font:9px 'Liberation Sans';color:#2a2a2a;white-space:nowrap;">Japan</div><svg style="position:absolute;left:1044.1000000000001px;top:389.35px" width="12" height="12"><path d="M3.1 3.1 L8.9 8.9 M8.9 3.1 L3.1 8.9" stroke="#9a9a9a" stroke-width="1.3"/></svg>
<div style="position:absolute;left:1064.5px;top:390.65000000000003px;line-height:12px;font:9px 'Liberation Sans';color:#333;white-space:nowrap;">/</div>
<div style="position:absolute;left:1074.1px;top:385.15000000000003px;width:168.9000000000001px;height:16.599999999999966px;background:#fff;border:1px solid #d9d9d9;border-radius:3px;"></div><svg style="position:absolute;left:1085.1px;top:389.35px" width="12" height="12"><circle cx="5.6" cy="5.6" r="3.6" fill="none" stroke="#888" stroke-width="1"/><path d="M8.2 8.2 L10 10" stroke="#888" stroke-width="1"/></svg><div style="position:absolute;left:1104.8px;top:390.65000000000003px;line-height:12px;font:9px 'Liberation Sans';color:#2a2a2a;white-space:nowrap;">Osaka</div><svg style="position:absolute;left:1230.7px;top:389.35px" width="12" height="12"><path d="M3.1 3.1 L8.9 8.9 M8.9 3.1 L3.1 8.9" stroke="#9a9a9a" stroke-width="1.3"/></svg>
<div style="position:absolute;left:887px;top:411.65000000000003px;width:356px;height:16.599999999999966px;background:#fff;border:1px solid #d9d9d9;border-radius:3px;"></div><div style="position:absolute;left:896.5px;top:417.15000000000003px;line-height:12px;font:9px 'Liberation Sans';color:#2a2a2a;white-space:nowrap;">Sotetsu Grand Fresa Osaka - Namba</div><svg style="position:absolute;left:1230.7px;top:415.85px" width="12" height="12"><path d="M3.1 3.1 L8.9 8.9 M8.9 3.1 L3.1 8.9" stroke="#9a9a9a" stroke-width="1.3"/></svg>
<div style="position:absolute;left:887px;top:438.00000000000006px;width:356px;height:16.599999999999966px;background:#fff;border:1px solid #d9d9d9;border-radius:3px;"></div><div style="position:absolute;left:896.5px;top:443.50000000000006px;line-height:12px;font:9px 'Liberation Sans';color:#2a2a2a;white-space:nowrap;"><span style="letter-spacing:0.14em">소테츠</span> <span style="letter-spacing:0.14em">그랜드</span> <span style="letter-spacing:0.14em">프레사</span> <span style="letter-spacing:0.14em">오사카</span> - <span style="letter-spacing:0.14em">난바</span></div><svg style="position:absolute;left:1230.7px;top:442.20000000000005px" width="12" height="12"><path d="M3.1 3.1 L8.9 8.9 M8.9 3.1 L3.1 8.9" stroke="#9a9a9a" stroke-width="1.3"/></svg>
<div style="position:absolute;left:887px;top:464.55px;width:356px;height:16.599999999999966px;background:#fff;border:1px solid #d9d9d9;border-radius:3px;"></div><div style="position:absolute;left:896.5px;top:470.05px;line-height:12px;font:9px 'Liberation Sans';color:#2a2a2a;white-space:nowrap;"><span style="letter-spacing:0.14em">相鉄グランドフレッサ</span> <span style="letter-spacing:0.14em">大阪なんば</span></div><svg style="position:absolute;left:1230.7px;top:468.75px" width="12" height="12"><path d="M3.1 3.1 L8.9 8.9 M8.9 3.1 L3.1 8.9" stroke="#9a9a9a" stroke-width="1.3"/></svg>
<div style="position:absolute;left:887px;top:491.1000000000001px;width:356px;height:16.599999999999966px;background:#fff;border:1px solid #d9d9d9;border-radius:3px;"></div><div style="position:absolute;left:896.5px;top:496.6000000000001px;line-height:12px;font:9px 'Liberation Sans';color:#2a2a2a;white-space:nowrap;">Sotetsu Grand Fresa Osaka - Namba</div><svg style="position:absolute;left:1230.7px;top:495.30000000000007px" width="12" height="12"><path d="M3.1 3.1 L8.9 8.9 M8.9 3.1 L3.1 8.9" stroke="#9a9a9a" stroke-width="1.3"/></svg>
<div style="position:absolute;left:887px;top:517.4499999999999px;width:356px;height:16.600000000000023px;background:#fff;border:1px solid #d9d9d9;border-radius:3px;"></div><div style="position:absolute;left:896.5px;top:522.9499999999999px;line-height:12px;font:9px 'Liberation Sans';color:#2a2a2a;white-space:nowrap;"><span style="letter-spacing:0.14em">大阪难波相铁</span> GRAND FRESA</div><svg style="position:absolute;left:1230.7px;top:521.65px" width="12" height="12"><path d="M3.1 3.1 L8.9 8.9 M8.9 3.1 L3.1 8.9" stroke="#9a9a9a" stroke-width="1.3"/></svg>
<div style="position:absolute;left:887px;top:543.9499999999999px;width:356px;height:16.600000000000023px;background:#fff;border:1px solid #d9d9d9;border-radius:3px;"></div><div style="position:absolute;left:896.5px;top:549.4499999999999px;line-height:12px;font:9px 'Liberation Sans';color:#2a2a2a;white-space:nowrap;">1-1-13 Nipponbashi, Chuo-ku</div><svg style="position:absolute;left:1230.7px;top:548.15px" width="12" height="12"><path d="M3.1 3.1 L8.9 8.9 M8.9 3.1 L3.1 8.9" stroke="#9a9a9a" stroke-width="1.3"/></svg>
<div style="position:absolute;left:887px;top:570.65px;width:356px;height:16.600000000000023px;background:#fff;border:1px solid #d9d9d9;border-radius:3px;"></div><div style="position:absolute;left:896.5px;top:576.15px;line-height:12px;font:9px 'Liberation Sans';color:#2a2a2a;white-space:nowrap;">1-1-13 Nipponbashi, Chuo-ku</div><svg style="position:absolute;left:1230.7px;top:574.85px" width="12" height="12"><path d="M3.1 3.1 L8.9 8.9 M8.9 3.1 L3.1 8.9" stroke="#9a9a9a" stroke-width="1.3"/></svg>
<div style="position:absolute;left:887px;top:597.1999999999999px;width:356px;height:16.600000000000023px;background:#fff;border:1px solid #d9d9d9;border-radius:3px;"></div><div style="position:absolute;left:896.5px;top:602.6999999999999px;line-height:12px;font:9px 'Liberation Sans';color:#2a2a2a;white-space:nowrap;"><span style="letter-spacing:0.14em">中央区日本橋</span> 1-1-13</div><svg style="position:absolute;left:1230.7px;top:601.4px" width="12" height="12"><path d="M3.1 3.1 L8.9 8.9 M8.9 3.1 L3.1 8.9" stroke="#9a9a9a" stroke-width="1.3"/></svg>
<div style="position:absolute;left:887px;top:623.7499999999999px;width:356px;height:16.600000000000023px;background:#fff;border:1px solid #d9d9d9;border-radius:3px;"></div><div style="position:absolute;left:896.5px;top:629.2499999999999px;line-height:12px;font:9px 'Liberation Sans';color:#2a2a2a;white-space:nowrap;">1-1-13 Nipponbashi, Chuo-ku</div><svg style="position:absolute;left:1230.7px;top:627.9499999999999px" width="12" height="12"><path d="M3.1 3.1 L8.9 8.9 M8.9 3.1 L3.1 8.9" stroke="#9a9a9a" stroke-width="1.3"/></svg>
<div style="position:absolute;left:887px;top:650.2499999999999px;width:356px;height:16.600000000000023px;background:#fff;border:1px solid #d9d9d9;border-radius:3px;"></div><div style="position:absolute;left:896.5px;top:655.7499999999999px;line-height:12px;font:9px 'Liberation Sans';color:#2a2a2a;white-space:nowrap;">1-1-13 Nipponbashi, Chuo-ku</div><svg style="position:absolute;left:1230.7px;top:654.4499999999999px" width="12" height="12"><path d="M3.1 3.1 L8.9 8.9 M8.9 3.1 L3.1 8.9" stroke="#9a9a9a" stroke-width="1.3"/></svg>
<div style="position:absolute;left:887px;top:676.4px;width:356px;height:16.600000000000023px;background:#fff;border:1px solid #d9d9d9;border-radius:3px;"></div><div style="position:absolute;left:896.5px;top:681.9px;line-height:12px;font:9px 'Liberation Sans';color:#2a2a2a;white-space:nowrap;">542-0073</div><svg style="position:absolute;left:1230.7px;top:680.6px" width="12" height="12"><path d="M3.1 3.1 L8.9 8.9 M8.9 3.1 L3.1 8.9" stroke="#9a9a9a" stroke-width="1.3"/></svg>
<div style="position:absolute;left:887px;top:702.75px;width:169.4000000000001px;height:16.600000000000023px;background:#fff;border:1px solid #d9d9d9;border-radius:3px;"></div>
<div style="position:absolute;left:1064.5px;top:708.25px;line-height:12px;font:9px 'Liberation Sans';color:#333;white-space:nowrap;">/</div>
<div style="position:absolute;left:1074.1px;top:702.75px;width:168.9000000000001px;height:16.600000000000023px;background:#fff;border:1px solid #d9d9d9;border-radius:3px;"></div>
<div style="position:absolute;left:887px;top:729.4499999999999px;width:356px;height:16.600000000000023px;background:#fff;border:1px solid #d9d9d9;border-radius:3px;"></div><div style="position:absolute;left:896.5px;top:734.9499999999999px;line-height:12px;font:italic 9px 'Liberation Sans';color:#c8c8c8;white-space:nowrap;">YYYY-MM</div>
<div style="position:absolute;left:887px;top:755.85px;width:356px;height:16.600000000000023px;background:#fff;border:1px solid #d9d9d9;border-radius:3px;"></div><div style="position:absolute;left:896.5px;top:761.35px;line-height:12px;font:9px 'Liberation Sans';color:#2a2a2a;white-space:nowrap;">1997</div><svg style="position:absolute;left:1230.7px;top:760.0500000000001px" width="12" height="12"><path d="M3.1 3.1 L8.9 8.9 M8.9 3.1 L3.1 8.9" stroke="#9a9a9a" stroke-width="1.3"/></svg>
<svg style="position:absolute;left:887px;top:783.0px" width="14" height="14"><rect x="0" y="0" width="14" height="14" fill="#93daf0"/><path d="M3.5 7 L6 9.3 L10.5 4.8" fill="none" stroke="#fff" stroke-width="1.1"/></svg>
<div style="position:absolute;left:908px;top:786.3px;line-height:12px;font:9px 'Liberation Sans';color:#2a2a2a;white-space:nowrap;">Hana</div>
<svg style="position:absolute;left:938.5px;top:783.0px" width="14" height="14"><rect x="0" y="0" width="14" height="14" fill="#93daf0"/><path d="M3.5 7 L6 9.3 L10.5 4.8" fill="none" stroke="#fff" stroke-width="1.1"/></svg>
<div style="position:absolute;left:959.7px;top:786.3px;line-height:12px;font:9px 'Liberation Sans';color:#2a2a2a;white-space:nowrap;">B2C</div>
<div style="position:absolute;left:887px;top:805.9px;width:356px;height:16.600000000000023px;background:#fff;border:1px solid #d9d9d9;border-radius:3px;"></div><div style="position:absolute;left:896.5px;top:811.4px;line-height:12px;font:9px 'Liberation Sans';color:#2a2a2a;white-space:nowrap;">16041</div><svg style="position:absolute;left:1230.7px;top:810.1px" width="12" height="12"><path d="M3.1 3.1 L8.9 8.9 M8.9 3.1 L3.1 8.9" stroke="#9a9a9a" stroke-width="1.3"/></svg>
<div style="position:absolute;left:887px;top:832.3px;width:356px;height:16.600000000000023px;background:#f0f0f0;border:1px solid #d9d9d9;border-radius:3px;"></div>
<div style="position:absolute;left:887px;top:858.85px;width:356px;height:16.600000000000023px;background:#f0f0f0;border:1px solid #d9d9d9;border-radius:3px;"></div>
<svg style="position:absolute;left:886px;top:886.0000000000001px" width="16" height="16"><circle cx="8" cy="8" r="7" fill="#8fd3ec"/><path d="M4.8 8 L7.2 10.3 L11.4 5.8" fill="none" stroke="#fff" stroke-width="1.2"/></svg>
<div style="position:absolute;left:908px;top:889.3000000000001px;line-height:12px;font:9px 'Liberation Sans';color:#2a2a2a;white-space:nowrap;">Yes</div>
<svg style="position:absolute;left:930px;top:886.0000000000001px" width="16" height="16"><circle cx="8" cy="8" r="6.6" fill="#fff" stroke="#d4d4d4" stroke-width="0.9"/></svg>
<div style="position:absolute;left:952px;top:889.3000000000001px;line-height:12px;font:9px 'Liberation Sans';color:#2a2a2a;white-space:nowrap;">No</div>
<div style="position:absolute;left:700px;top:905px;width:1106px;height:26px;overflow:hidden">
<div style="position:absolute;left:-700px;top:-905px;width:1906px;height:971px">
<div style="position:absolute;left:887px;top:909.9px;width:890.5px;height:48.10000000000002px;background:#fff;border:1px solid #d0d0d0;border-radius:2px;"></div>
<div style="position:absolute;left:896.5px;top:919.5px;line-height:12px;font:9.5px 'Liberation Sans';color:#222;white-space:nowrap;width:876px;overflow:hidden;">130959 || SOTETSU GRAND FRESA OSAKA - NAMBA || SOTETSUGRANDFRESAOSAKANAMBA || <span style="letter-spacing:0.14em">소테츠</span> <span style="letter-spacing:0.14em">그랜드</span> <span style="letter-spacing:0.14em">프레사</span> <span style="letter-spacing:0.14em">오사카</span> - <span style="letter-spacing:0.14em">난바</span> || <span style="letter-spacing:0.14em">소테츠그랜드프레사오사카난바</span> || <span style="letter-spacing:0.14em">相鉄グランドフレッサ</span> <span style="letter-spacing:0.14em">大阪なんば</span> || <span style="letter-spacing:0.14em">相</span></div>
<div style="position:absolute;left:1775.2px;top:910.5px;width:4.2999999999999545px;height:49.5px;background:#999;border-radius:0px;"></div>
</div></div>
<div style="position:absolute;left:1253.9px;top:354px;width:159.5999999999999px;height:27.600000000000023px;background:#f1f1f1;border-radius:0px;"></div>
<div style="position:absolute;left:1253.4px;top:381.1px;width:534.5999999999999px;height:1.0px;background:#dedede;border-radius:0px;"></div>
<div style="position:absolute;left:1253.9px;top:382.1px;width:159.5999999999999px;height:25.799999999999955px;background:#f1f1f1;border-radius:0px;"></div>
<div style="position:absolute;left:1253.4px;top:407.4px;width:534.5999999999999px;height:1.0px;background:#dedede;border-radius:0px;"></div>
<div style="position:absolute;left:1253.9px;top:408.4px;width:159.5999999999999px;height:26.200000000000045px;background:#f1f1f1;border-radius:0px;"></div>
<div style="position:absolute;left:1253.4px;top:434.1px;width:534.5999999999999px;height:1.0px;background:#dedede;border-radius:0px;"></div>
<div style="position:absolute;left:1253.9px;top:435.1px;width:159.5999999999999px;height:25.5px;background:#f1f1f1;border-radius:0px;"></div>
<div style="position:absolute;left:1253.4px;top:460.1px;width:534.5999999999999px;height:1.0px;background:#dedede;border-radius:0px;"></div>
<div style="position:absolute;left:1253.9px;top:461.1px;width:159.5999999999999px;height:26.599999999999966px;background:#f1f1f1;border-radius:0px;"></div>
<div style="position:absolute;left:1253.4px;top:487.2px;width:534.5999999999999px;height:1.0px;background:#dedede;border-radius:0px;"></div>
<div style="position:absolute;left:1253.9px;top:488.2px;width:159.5999999999999px;height:25.500000000000057px;background:#f1f1f1;border-radius:0px;"></div>
<div style="position:absolute;left:1253.4px;top:513.2px;width:534.5999999999999px;height:1.0px;background:#dedede;border-radius:0px;"></div>
<div style="position:absolute;left:1253.9px;top:514.2px;width:159.5999999999999px;height:26.199999999999932px;background:#f1f1f1;border-radius:0px;"></div>
<div style="position:absolute;left:1253.4px;top:539.9px;width:534.5999999999999px;height:1.0px;background:#dedede;border-radius:0px;"></div>
<div style="position:absolute;left:1253.9px;top:540.9px;width:159.5999999999999px;height:25.800000000000068px;background:#f1f1f1;border-radius:0px;"></div>
<div style="position:absolute;left:1253.4px;top:566.2px;width:534.5999999999999px;height:1.0px;background:#dedede;border-radius:0px;"></div>
<div style="position:absolute;left:1253.9px;top:567.2px;width:159.5999999999999px;height:26.59999999999991px;background:#f1f1f1;border-radius:0px;"></div>
<div style="position:absolute;left:1253.4px;top:593.3px;width:534.5999999999999px;height:1.0px;background:#dedede;border-radius:0px;"></div>
<div style="position:absolute;left:1413.5px;top:354px;width:1.0px;height:239.79999999999995px;background:#e0e0e0;border-radius:0px;"></div>
<div style="position:absolute;left:1261.5px;top:361.90000000000003px;line-height:12px;font:9.4px 'Liberation Sans';color:#1f1f1f;white-space:nowrap;-webkit-text-stroke:0.25px;">Register Status<span style="color:#e8242a;position:relative;top:-1px"> *</span></div>
<div style="position:absolute;left:1261.5px;top:388.85px;line-height:12px;font:9.4px 'Liberation Sans';color:#1f1f1f;white-space:nowrap;-webkit-text-stroke:0.25px;">Hotel Type<span style="color:#e8242a;position:relative;top:-1px"> *</span></div>
<div style="position:absolute;left:1261.5px;top:415.35px;line-height:12px;font:9.4px 'Liberation Sans';color:#1f1f1f;white-space:nowrap;-webkit-text-stroke:0.25px;">Chain Brand</div>
<div style="position:absolute;left:1261.5px;top:441.70000000000005px;line-height:12px;font:9.4px 'Liberation Sans';color:#1f1f1f;white-space:nowrap;-webkit-text-stroke:0.25px;">Star Rating</div>
<div style="position:absolute;left:1261.5px;top:468.25px;line-height:12px;font:9.4px 'Liberation Sans';color:#1f1f1f;white-space:nowrap;-webkit-text-stroke:0.25px;">Phone No.</div>
<div style="position:absolute;left:1261.5px;top:494.80000000000007px;line-height:12px;font:9.4px 'Liberation Sans';color:#1f1f1f;white-space:nowrap;-webkit-text-stroke:0.25px;">Fax No.</div>
<div style="position:absolute;left:1261.5px;top:521.1499999999999px;line-height:12px;font:9.4px 'Liberation Sans';color:#1f1f1f;white-space:nowrap;-webkit-text-stroke:0.25px;">Check in / Out Time<span style="color:#e8242a;position:relative;top:-1px"> *</span></div>
<div style="position:absolute;left:1261.5px;top:547.6499999999999px;line-height:12px;font:9.4px 'Liberation Sans';color:#1f1f1f;white-space:nowrap;-webkit-text-stroke:0.25px;">Floor / Room Count</div>
<div style="position:absolute;left:1261.5px;top:574.3499999999999px;line-height:12px;font:9.4px 'Liberation Sans';color:#1f1f1f;white-space:nowrap;-webkit-text-stroke:0.25px;">Latitude / Longitude</div>
<svg style="position:absolute;left:1421px;top:360.40000000000003px" width="16" height="16"><circle cx="8" cy="8" r="6.6" fill="#fff" stroke="#d4d4d4" stroke-width="0.9"/></svg>
<div style="position:absolute;left:1442.7px;top:362.90000000000003px;line-height:12px;font:9.4px 'Liberation Sans';color:#333;white-space:nowrap;">Approval Pending</div>
<svg style="position:absolute;left:1526px;top:360.40000000000003px" width="16" height="16"><circle cx="8" cy="8" r="7" fill="#8fd3ec"/><path d="M4.8 8 L7.2 10.3 L11.4 5.8" fill="none" stroke="#fff" stroke-width="1.2"/></svg>
<div style="position:absolute;left:1547.7px;top:362.90000000000003px;line-height:12px;font:9.4px 'Liberation Sans';color:#2ec0b0;white-space:nowrap;">Approved</div>
<svg style="position:absolute;left:1596.6px;top:360.40000000000003px" width="16" height="16"><circle cx="8" cy="8" r="6.6" fill="#fff" stroke="#d4d4d4" stroke-width="0.9"/></svg>
<div style="position:absolute;left:1618.3px;top:362.90000000000003px;line-height:12px;font:9.4px 'Liberation Sans';color:#f5333a;white-space:nowrap;">Sale Suspended</div>
<div style="position:absolute;left:1422.6px;top:385.15000000000003px;width:354.8000000000002px;height:16.599999999999966px;background:#fff;border:1px solid #d0d0d0;border-radius:3px;"></div>
<div style="position:absolute;left:1431.6px;top:390.65000000000003px;line-height:12px;font:9px 'Liberation Sans';color:#222;white-space:nowrap;">Hotel</div>
<svg style="position:absolute;left:1761.5px;top:389.35px" width="12" height="12"><path d="M1.7999999999999998 3.9 L10.2 3.9 L6 8.1 Z" fill="#111"/></svg>
<div style="position:absolute;left:1422.6px;top:411.65000000000003px;width:354.8000000000002px;height:16.599999999999966px;background:#fff;border:1px solid #d9d9d9;border-radius:3px;"></div><svg style="position:absolute;left:1433.6px;top:415.85px" width="12" height="12"><circle cx="5.6" cy="5.6" r="3.6" fill="none" stroke="#888" stroke-width="1"/><path d="M8.2 8.2 L10 10" stroke="#888" stroke-width="1"/></svg><div style="position:absolute;left:1453.3px;top:417.15000000000003px;line-height:12px;font:9px 'Liberation Sans';color:#2a2a2a;white-space:nowrap;">Sotetsu Hotel Management Co., Ltd.</div><svg style="position:absolute;left:1765.1000000000001px;top:415.85px" width="12" height="12"><path d="M3.1 3.1 L8.9 8.9 M8.9 3.1 L3.1 8.9" stroke="#9a9a9a" stroke-width="1.3"/></svg>
<div style="position:absolute;left:1422.6px;top:438.00000000000006px;width:354.8000000000002px;height:16.599999999999966px;background:#fff;border:1px solid #d0d0d0;border-radius:3px;"></div>
<div style="position:absolute;left:1431.6px;top:443.50000000000006px;line-height:12px;font:9px 'Liberation Sans';color:#222;white-space:nowrap;">3.5</div>
<svg style="position:absolute;left:1761.5px;top:442.20000000000005px" width="12" height="12"><path d="M1.7999999999999998 3.9 L10.2 3.9 L6 8.1 Z" fill="#111"/></svg>
<div style="position:absolute;left:1422.6px;top:464.55px;width:354.8000000000002px;height:16.599999999999966px;background:#fff;border:1px solid #d9d9d9;border-radius:3px;"></div><div style="position:absolute;left:1432.1px;top:470.05px;line-height:12px;font:9px 'Liberation Sans';color:#2a2a2a;white-space:nowrap;">81-6-76682030</div><svg style="position:absolute;left:1765.1000000000001px;top:468.75px" width="12" height="12"><path d="M3.1 3.1 L8.9 8.9 M8.9 3.1 L3.1 8.9" stroke="#9a9a9a" stroke-width="1.3"/></svg>
<div style="position:absolute;left:1422.6px;top:491.1000000000001px;width:354.8000000000002px;height:16.599999999999966px;background:#fff;border:1px solid #d9d9d9;border-radius:3px;"></div><div style="position:absolute;left:1432.1px;top:496.6000000000001px;line-height:12px;font:9px 'Liberation Sans';color:#2a2a2a;white-space:nowrap;">81-6-76682035</div><svg style="position:absolute;left:1765.1000000000001px;top:495.30000000000007px" width="12" height="12"><path d="M3.1 3.1 L8.9 8.9 M8.9 3.1 L3.1 8.9" stroke="#9a9a9a" stroke-width="1.3"/></svg>
<div style="position:absolute;left:1422.6px;top:517.4499999999999px;width:135.9000000000001px;height:16.600000000000023px;background:#fff;border:1px solid #d9d9d9;border-radius:3px;"></div><div style="position:absolute;left:1432.1px;top:522.9499999999999px;line-height:12px;font:9px 'Liberation Sans';color:#2a2a2a;white-space:nowrap;">3:00 PM</div><svg style="position:absolute;left:1546.2px;top:521.65px" width="12" height="12"><path d="M3.1 3.1 L8.9 8.9 M8.9 3.1 L3.1 8.9" stroke="#9a9a9a" stroke-width="1.3"/></svg>
<div style="position:absolute;left:1566.6px;top:522.9499999999999px;line-height:12px;font:9px 'Liberation Sans';color:#333;white-space:nowrap;">/</div>
<div style="position:absolute;left:1576.4px;top:517.4499999999999px;width:136.79999999999995px;height:16.600000000000023px;background:#fff;border:1px solid #d9d9d9;border-radius:3px;"></div><div style="position:absolute;left:1585.9px;top:522.9499999999999px;line-height:12px;font:9px 'Liberation Sans';color:#2a2a2a;white-space:nowrap;">11:00 AM</div><svg style="position:absolute;left:1700.9px;top:521.65px" width="12" height="12"><path d="M3.1 3.1 L8.9 8.9 M8.9 3.1 L3.1 8.9" stroke="#9a9a9a" stroke-width="1.3"/></svg>
<div style="position:absolute;left:1718.3px;top:522.9499999999999px;line-height:12px;font:8.6px 'Liberation Sans';color:#ef7f1a;white-space:nowrap;">*24-hours time</div>
<div style="position:absolute;left:1422.6px;top:543.9499999999999px;width:167.9000000000001px;height:16.600000000000023px;background:#fff;border:1px solid #d9d9d9;border-radius:3px;"></div><div style="position:absolute;left:1432.1px;top:549.4499999999999px;line-height:12px;font:9px 'Liberation Sans';color:#2a2a2a;white-space:nowrap;">14</div><svg style="position:absolute;left:1578.2px;top:548.15px" width="12" height="12"><path d="M3.1 3.1 L8.9 8.9 M8.9 3.1 L3.1 8.9" stroke="#9a9a9a" stroke-width="1.3"/></svg>
<div style="position:absolute;left:1598.5px;top:549.4499999999999px;line-height:12px;font:9px 'Liberation Sans';color:#333;white-space:nowrap;">/</div>
<div style="position:absolute;left:1608px;top:543.9499999999999px;width:169.4000000000001px;height:16.600000000000023px;background:#fff;border:1px solid #d9d9d9;border-radius:3px;"></div><div style="position:absolute;left:1617.5px;top:549.4499999999999px;line-height:12px;font:9px 'Liberation Sans';color:#2a2a2a;white-space:nowrap;">698</div><svg style="position:absolute;left:1765.1000000000001px;top:548.15px" width="12" height="12"><path d="M3.1 3.1 L8.9 8.9 M8.9 3.1 L3.1 8.9" stroke="#9a9a9a" stroke-width="1.3"/></svg>
<div style="position:absolute;left:1422.6px;top:570.65px;width:167.9000000000001px;height:16.600000000000023px;background:#fff;border:1px solid #d9d9d9;border-radius:3px;"></div><div style="position:absolute;left:1432.1px;top:576.15px;line-height:12px;font:9px 'Liberation Sans';color:#2a2a2a;white-space:nowrap;">34.668485</div><svg style="position:absolute;left:1578.2px;top:574.85px" width="12" height="12"><path d="M3.1 3.1 L8.9 8.9 M8.9 3.1 L3.1 8.9" stroke="#9a9a9a" stroke-width="1.3"/></svg>
<div style="position:absolute;left:1598.5px;top:576.15px;line-height:12px;font:9px 'Liberation Sans';color:#333;white-space:nowrap;">/</div>
<div style="position:absolute;left:1608px;top:570.65px;width:169.4000000000001px;height:16.600000000000023px;background:#fff;border:1px solid #d9d9d9;border-radius:3px;"></div><div style="position:absolute;left:1617.5px;top:576.15px;line-height:12px;font:9px 'Liberation Sans';color:#2a2a2a;white-space:nowrap;">135.506494</div><svg style="position:absolute;left:1765.1000000000001px;top:574.85px" width="12" height="12"><path d="M3.1 3.1 L8.9 8.9 M8.9 3.1 L3.1 8.9" stroke="#9a9a9a" stroke-width="1.3"/></svg>
<div style="position:absolute;left:1254.3px;top:598.6px;width:531.3px;height:15.399999999999977px;background:#fff;border:1px solid #dadada;border-radius:2px;"></div>
<div style="position:absolute;left:1262px;top:602.3px;line-height:12px;font:italic 8.6px 'Liberation Sans';color:#c4c4c4;white-space:nowrap;">Search...</div>
<div style="position:absolute;left:1253px;top:593.8px;width:1px;height:311.4000000000001px;background:#dedede;border-radius:0px;"></div>
<div style="position:absolute;left:1253px;top:904.7px;width:535px;height:1.0px;background:#dedede;border-radius:0px;"></div>
<div style="position:absolute;left:1253.5px;top:615.8px;width:534.5px;height:276px;overflow:hidden"><svg width="534.5" height="276" viewBox="0 0 534.5 276"><rect width="534.5" height="276" fill="#f1f0f3"/><rect x="98" y="11" width="82" height="82" fill="#f6ead0" opacity="0.75"/><rect x="216" y="28" width="50" height="112" fill="#f6ead0" opacity="0.75"/><rect x="168" y="149" width="99" height="88" fill="#f6ead0" opacity="0.75"/><rect x="351" y="134" width="70" height="44" fill="#f6ead0" opacity="0.75"/><rect x="300" y="40" width="70" height="60" fill="#f6ead0" opacity="0.75"/><rect x="470" y="40" width="40" height="60" fill="#f6ead0" opacity="0.75"/><rect x="520" y="20" width="14" height="80" fill="#f6ead0" opacity="0.75"/><rect x="420" y="150" width="40" height="30" fill="#f6ead0" opacity="0.75"/><rect x="500" y="220" width="30" height="50" fill="#f6ead0" opacity="0.75"/><rect x="230" y="10" width="35" height="20" fill="#f6ead0" opacity="0.75"/><rect x="0" y="60" width="20" height="40" fill="#f6ead0" opacity="0.75"/><g stroke="#e4e6ec" stroke-width="0.8"><path d="M4 0 V276"/><path d="M15 0 V276"/><path d="M26 0 V276"/><path d="M37 0 V276"/><path d="M48 0 V276"/><path d="M59 0 V276"/><path d="M70 0 V276"/><path d="M81 0 V276"/><path d="M92 0 V276"/><path d="M103 0 V276"/><path d="M114 0 V276"/><path d="M125 0 V276"/><path d="M136 0 V276"/><path d="M147 0 V276"/><path d="M158 0 V276"/><path d="M169 0 V276"/><path d="M180 0 V276"/><path d="M191 0 V276"/><path d="M202 0 V276"/><path d="M213 0 V276"/><path d="M224 0 V276"/><path d="M235 0 V276"/><path d="M246 0 V276"/><path d="M257 0 V276"/><path d="M268 0 V276"/><path d="M279 0 V276"/><path d="M290 0 V276"/><path d="M301 0 V276"/><path d="M312 0 V276"/><path d="M323 0 V276"/><path d="M334 0 V276"/><path d="M345 0 V276"/><path d="M356 0 V276"/><path d="M367 0 V276"/><path d="M378 0 V276"/><path d="M389 0 V276"/><path d="M400 0 V276"/><path d="M411 0 V276"/><path d="M422 0 V276"/><path d="M433 0 V276"/><path d="M444 0 V276"/><path d="M455 0 V276"/><path d="M466 0 V276"/><path d="M477 0 V276"/><path d="M488 0 V276"/><path d="M499 0 V276"/><path d="M510 0 V276"/><path d="M521 0 V276"/><path d="M532 0 V276"/><path d="M0 5 H534.5"/><path d="M0 17 H534.5"/><path d="M0 29 H534.5"/><path d="M0 41 H534.5"/><path d="M0 53 H534.5"/><path d="M0 65 H534.5"/><path d="M0 77 H534.5"/><path d="M0 89 H534.5"/><path d="M0 101 H534.5"/><path d="M0 113 H534.5"/><path d="M0 125 H534.5"/><path d="M0 137 H534.5"/><path d="M0 149 H534.5"/><path d="M0 161 H534.5"/><path d="M0 173 H534.5"/><path d="M0 185 H534.5"/><path d="M0 197 H534.5"/><path d="M0 209 H534.5"/><path d="M0 221 H534.5"/><path d="M0 233 H534.5"/><path d="M0 245 H534.5"/><path d="M0 257 H534.5"/><path d="M0 269 H534.5"/></g><g stroke="#ffffff" stroke-width="0.9"><path d="M9 0 V276"/><path d="M20 0 V276"/><path d="M31 0 V276"/><path d="M42 0 V276"/><path d="M53 0 V276"/><path d="M64 0 V276"/><path d="M75 0 V276"/><path d="M86 0 V276"/><path d="M97 0 V276"/><path d="M108 0 V276"/><path d="M119 0 V276"/><path d="M130 0 V276"/><path d="M141 0 V276"/><path d="M152 0 V276"/><path d="M163 0 V276"/><path d="M174 0 V276"/><path d="M185 0 V276"/><path d="M196 0 V276"/><path d="M207 0 V276"/><path d="M218 0 V276"/><path d="M229 0 V276"/><path d="M240 0 V276"/><path d="M251 0 V276"/><path d="M262 0 V276"/><path d="M273 0 V276"/><path d="M284 0 V276"/><path d="M295 0 V276"/><path d="M306 0 V276"/><path d="M317 0 V276"/><path d="M328 0 V276"/><path d="M339 0 V276"/><path d="M350 0 V276"/><path d="M361 0 V276"/><path d="M372 0 V276"/><path d="M383 0 V276"/><path d="M394 0 V276"/><path d="M405 0 V276"/><path d="M416 0 V276"/><path d="M427 0 V276"/><path d="M438 0 V276"/><path d="M449 0 V276"/><path d="M460 0 V276"/><path d="M471 0 V276"/><path d="M482 0 V276"/><path d="M493 0 V276"/><path d="M504 0 V276"/><path d="M515 0 V276"/><path d="M526 0 V276"/><path d="M0 11 H534.5"/><path d="M0 23 H534.5"/><path d="M0 35 H534.5"/><path d="M0 47 H534.5"/><path d="M0 59 H534.5"/><path d="M0 71 H534.5"/><path d="M0 83 H534.5"/><path d="M0 95 H534.5"/><path d="M0 107 H534.5"/><path d="M0 119 H534.5"/><path d="M0 131 H534.5"/><path d="M0 143 H534.5"/><path d="M0 155 H534.5"/><path d="M0 167 H534.5"/><path d="M0 179 H534.5"/><path d="M0 191 H534.5"/><path d="M0 203 H534.5"/><path d="M0 215 H534.5"/><path d="M0 227 H534.5"/><path d="M0 239 H534.5"/><path d="M0 251 H534.5"/><path d="M0 263 H534.5"/><path d="M0 275 H534.5"/></g><rect x="32" y="45" width="14" height="18" fill="#c6ead0"/><rect x="25" y="52" width="10" height="12" fill="#c6ead0"/><rect x="130" y="17" width="10" height="4" fill="#c6ead0"/><rect x="80" y="20" width="8" height="4" fill="#c6ead0"/><rect x="160" y="35" width="12" height="4" fill="#c6ead0"/><rect x="144" y="55" width="6" height="6" fill="#c6ead0"/><rect x="165" y="98" width="6" height="6" fill="#c6ead0"/><rect x="78" y="108" width="8" height="5" fill="#c6ead0"/><rect x="60" y="203" width="12" height="14" fill="#c6ead0"/><rect x="20" y="225" width="10" height="14" fill="#c6ead0"/><rect x="451" y="83" width="20" height="57" fill="#c6ead0"/><rect x="490" y="55" width="8" height="10" fill="#c6ead0"/><rect x="410" y="72" width="8" height="12" fill="#c6ead0"/><rect x="460" y="20" width="12" height="10" fill="#c6ead0"/><rect x="437" y="136" width="10" height="12" fill="#c6ead0"/><rect x="433" y="75" width="12" height="12" fill="#c6ead0"/><rect x="355" y="170" width="10" height="8" fill="#c6ead0"/><rect x="520" y="40" width="8" height="6" fill="#c6ead0"/><rect x="335" y="200" width="8" height="8" fill="#c6ead0"/><rect x="240" y="210" width="8" height="8" fill="#c6ead0"/><rect x="218" y="230" width="6" height="6" fill="#c6ead0"/><rect x="270" y="190" width="10" height="6" fill="#c6ead0"/><g fill="none" stroke="#c3d0e2" stroke-width="2.4"><path d="M151 0 V276"/><path d="M98 0 L95 276"/><path d="M0 25 L60 30 L120 25 L200 24"/><path d="M420 0 L410 140 L395 276"/><path d="M0 210 L100 208 L266 212"/><path d="M266 100 L534 110"/><path d="M300 200 L534 215"/><path d="M40 0 L5 90"/><path d="M520 0 L505 276"/><path d="M230 0 L232 276"/><path d="M0 180 L60 175 L120 190"/><path d="M340 30 L534 45"/><path d="M0 120 L40 118"/><path d="M360 0 L350 276"/><path d="M450 120 L440 276"/></g><g fill="none" stroke="#92d5ec" stroke-width="5.5" stroke-linejoin="round"><path d="M62 -2 C58 30 57 45 55 60 C52 80 48 95 42 110 C36 122 28 128 20 135 C10 142 4 146 -2 150"/><path d="M40 122 C70 124 100 122 130 124 C150 126 170 128 185 130"/><path d="M42 140 C48 160 53 185 53 207 C52 225 46 240 30 276"/></g><path d="M185 131 L268 133" stroke="#a7def0" stroke-width="2" fill="none"/><g fill="none" stroke="#8e8e8e" stroke-width="1.3"><path d="M-1 150 C30 165 60 180 82 190 C95 205 103 222 110 237 L143 276"/><path d="M169 168 L155 220 L143 276"/><path d="M511 0 L495 80 L483 140 L465 200 L449 276"/><path d="M360 0 L355 140 L331 276"/></g><g fill="none" stroke="#444" stroke-width="1"><path d="M0 100 C20 98 30 105 38 118 C45 130 52 140 60 142 L180 146"/><path d="M300 155 L427 165 L515 160 L534 156"/><path d="M388 168 L534 169"/><path d="M485 73 L503 21 L506 0"/><path d="M38 118 C30 95 25 85 10 70"/></g><g fill="none" stroke="#7893b6" stroke-width="5" stroke-linejoin="round" stroke-linecap="butt"><path d="M93 3 L534 2"/><path d="M-2 46 C20 30 40 18 65 11 C75 7 85 5 95 3"/><path d="M190 0 L191 140 L192 210 L191 276"/><path d="M305 0 L304 120 L301 155 L286 276"/><path d="M96 134 L95 236 C93 250 88 262 81 276"/><path d="M100 139 C130 141 160 144 180 146 C190 148 196 150 205 155"/><path d="M182 134 C195 150 205 170 219 196 C222 220 216 250 216 276"/><path d="M267 154 L300 154"/></g><g fill="none" stroke="#819cc0" stroke-width="4.2" stroke-linejoin="round"><path d="M115 66 L200 67 L267 67 L317 66 C325 60 330 58 340 58 L403 60 C420 63 430 68 439 70 L483 73 L534 77"/><path d="M214 0 L214 140"/></g><g fill="none" stroke="#98afcc" stroke-width="3.5"><path d="M47 0 L30 50 L5 92"/><path d="M0 255 L20 270"/></g><g fill="none" stroke="#7893b6" stroke-width="2"><path d="M213 172 L192 199"/><path d="M60 142 C80 140 95 139 100 139"/></g><g fill="none" stroke="#b3c3d9" stroke-width="2"><path d="M455 0 L440 140 L420 276"/><path d="M266 115 L534 120"/><path d="M0 240 L90 236"/><path d="M120 160 L110 276"/></g><g fill="none" stroke="#5d7aa3" stroke-width="0.6"><path d="M93 3 L534 2"/><path d="M190 0 L191 276"/><path d="M305 0 L304 120 L301 155 L286 276"/></g><g><rect x="144.5" y="9" width="13" height="10" rx="4" fill="#3b78d8"/><text x="151" y="17" text-anchor="middle" font-family="Liberation Sans" font-size="7" font-weight="bold" fill="#fff">41</text></g><g><rect x="122.5" y="60" width="17" height="10" rx="4" fill="#3b78d8"/><text x="131" y="68" text-anchor="middle" font-family="Liberation Sans" font-size="7" font-weight="bold" fill="#fff">173</text></g><g><rect x="90.5" y="76" width="13" height="10" rx="4" fill="#3b78d8"/><text x="97" y="84" text-anchor="middle" font-family="Liberation Sans" font-size="7" font-weight="bold" fill="#fff">29</text></g><g><rect x="28.5" y="84" width="17" height="10" rx="4" fill="#3b78d8"/><text x="37" y="92" text-anchor="middle" font-family="Liberation Sans" font-size="7" font-weight="bold" fill="#fff">173</text></g><g><rect x="227.5" y="63" width="17" height="10" rx="4" fill="#3b78d8"/><text x="236" y="71" text-anchor="middle" font-family="Liberation Sans" font-size="7" font-weight="bold" fill="#fff">308</text></g><g><rect x="353.5" y="12" width="13" height="10" rx="4" fill="#3b78d8"/><text x="360" y="20" text-anchor="middle" font-family="Liberation Sans" font-size="7" font-weight="bold" fill="#fff">30</text></g><g><rect x="402.5" y="56" width="17" height="10" rx="4" fill="#3b78d8"/><text x="411" y="64" text-anchor="middle" font-family="Liberation Sans" font-size="7" font-weight="bold" fill="#fff">308</text></g><g><rect x="101.5" y="256" width="13" height="10" rx="4" fill="#3b78d8"/><text x="108" y="264" text-anchor="middle" font-family="Liberation Sans" font-size="7" font-weight="bold" fill="#fff">29</text></g><g><rect x="184.5" y="253" width="13" height="10" rx="4" fill="#3b78d8"/><text x="191" y="261" text-anchor="middle" font-family="Liberation Sans" font-size="7" font-weight="bold" fill="#fff">25</text></g><g><rect x="333.5" y="196" width="13" height="10" rx="4" fill="#3b78d8"/><text x="340" y="204" text-anchor="middle" font-family="Liberation Sans" font-size="7" font-weight="bold" fill="#fff">30</text></g><g><rect x="525.5" y="77" width="13" height="10" rx="4" fill="#3b78d8"/><text x="532" y="85" text-anchor="middle" font-family="Liberation Sans" font-size="7" font-weight="bold" fill="#fff">30</text></g><g><path d="M3 32 H17 V38 Q10 44 3 38 Z" fill="#5b9a3c"/><text x="10" y="39" text-anchor="middle" font-family="Liberation Sans" font-size="6.5" font-weight="bold" fill="#fff">16</text></g><g><path d="M183 57 H197 V63 Q190 69 183 63 Z" fill="#5b9a3c"/><text x="190" y="64" text-anchor="middle" font-family="Liberation Sans" font-size="6.5" font-weight="bold" fill="#fff">1</text></g><g><path d="M297 89 H311 V95 Q304 101 297 95 Z" fill="#5b9a3c"/><text x="304" y="96" text-anchor="middle" font-family="Liberation Sans" font-size="6.5" font-weight="bold" fill="#fff">1</text></g><g><path d="M175 142 H189 V148 Q182 154 175 148 Z" fill="#5b9a3c"/><text x="182" y="149" text-anchor="middle" font-family="Liberation Sans" font-size="6.5" font-weight="bold" fill="#fff">15</text></g><g><path d="M278 262 H292 V268 Q285 274 278 268 Z" fill="#5b9a3c"/><text x="285" y="269" text-anchor="middle" font-family="Liberation Sans" font-size="6.5" font-weight="bold" fill="#fff">1</text></g><g><rect x="86.0" y="34.5" width="26" height="11" fill="#4f9a3f"/><text x="99" y="43" text-anchor="middle" font-family="Liberation Sans" font-size="7.5" fill="#fff">西長堀</text></g><g><rect x="297.5" y="20.5" width="19" height="11" fill="#4f9a3f"/><text x="307" y="29" text-anchor="middle" font-family="Liberation Sans" font-size="7.5" fill="#fff">長堀</text></g><g><rect x="287.0" y="121.5" width="34" height="17" fill="#4f9a3f"/><text x="304" y="133" text-anchor="middle" font-family="Liberation Sans" font-size="7.5" fill="#fff">Dotonbori</text></g><g><rect x="372.0" y="-0.5" width="36" height="11" fill="#4f9a3f"/><text x="390" y="8" text-anchor="middle" font-family="Liberation Sans" font-size="7.5" fill="#fff">法円坂</text></g><g><rect x="328.0" y="152.5" width="18" height="11" fill="#4f9a3f"/><text x="337" y="161" text-anchor="middle" font-family="Liberation Sans" font-size="7.5" fill="#fff">高津</text></g><g><rect x="198.5" y="232.5" width="26" height="11" fill="#4f9a3f"/><text x="211.5" y="241" text-anchor="middle" font-family="Liberation Sans" font-size="7.5" fill="#fff">なんば</text></g><rect x="89.8" y="-0.20000000000000018" width="6.4" height="6.4" rx="1.2" fill="#2c3a8c"/><rect x="152.8" y="60.8" width="6.4" height="6.4" rx="1.2" fill="#2c3a8c"/><rect x="179.8" y="74.8" width="6.4" height="6.4" rx="1.2" fill="#2c3a8c"/><rect x="209.8" y="65.8" width="6.4" height="6.4" rx="1.2" fill="#2c3a8c"/><rect x="316.8" y="59.8" width="6.4" height="6.4" rx="1.2" fill="#2c3a8c"/><rect x="356.8" y="54.8" width="6.4" height="6.4" rx="1.2" fill="#2c3a8c"/><rect x="111.8" y="135.8" width="6.4" height="6.4" rx="1.2" fill="#2c3a8c"/><rect x="187.8" y="268.8" width="6.4" height="6.4" rx="1.2" fill="#2c3a8c"/><rect x="481.8" y="169.8" width="6.4" height="6.4" rx="1.2" fill="#2c3a8c"/><rect x="529.8" y="-1.2000000000000002" width="6.4" height="6.4" rx="1.2" fill="#2c3a8c"/><text x="100" y="61" text-anchor="middle" font-family="Liberation Sans" font-size="10" font-weight="normal" fill="#555" stroke="#f4f4f6" stroke-width="2" paint-order="stroke">니시구</text><text x="100" y="74" text-anchor="middle" font-family="Liberation Sans" font-size="10" font-weight="normal" fill="#555" stroke="#f4f4f6" stroke-width="2" paint-order="stroke">西区</text><text x="120" y="96" text-anchor="middle" font-family="Liberation Sans" font-size="7.5" font-weight="normal" fill="#666" stroke="#f4f4f6" stroke-width="2" paint-order="stroke">北堀江通</text><text x="219" y="88" text-anchor="middle" font-family="Liberation Sans" font-size="8" font-weight="normal" fill="#666" stroke="#f4f4f6" stroke-width="2" paint-order="stroke">신사이바시</text><text x="219" y="98" text-anchor="middle" font-family="Liberation Sans" font-size="8" font-weight="normal" fill="#666" stroke="#f4f4f6" stroke-width="2" paint-order="stroke">스지</text><text x="219" y="109" text-anchor="middle" font-family="Liberation Sans" font-size="8" font-weight="normal" fill="#666" stroke="#f4f4f6" stroke-width="2" paint-order="stroke">心斎橋筋</text><text x="240" y="17" text-anchor="middle" font-family="Liberation Sans" font-size="9" font-weight="normal" fill="#666" stroke="#f4f4f6" stroke-width="2" paint-order="stroke">난바신사</text><text x="240" y="27" text-anchor="middle" font-family="Liberation Sans" font-size="7.5" font-weight="normal" fill="#777" stroke="#f4f4f6" stroke-width="2" paint-order="stroke">難波神社</text><text x="265" y="66" text-anchor="middle" font-family="Liberation Sans" font-size="10" font-weight="normal" fill="#555" stroke="#f4f4f6" stroke-width="2" paint-order="stroke">주오구</text><text x="265" y="78" text-anchor="middle" font-family="Liberation Sans" font-size="10" font-weight="normal" fill="#555" stroke="#f4f4f6" stroke-width="2" paint-order="stroke">中央区</text><text x="392" y="34" text-anchor="middle" font-family="Liberation Sans" font-size="7.5" font-weight="normal" fill="#666" stroke="#f4f4f6" stroke-width="2" paint-order="stroke">内久宝寺町通</text><text x="468" y="84" text-anchor="middle" font-family="Liberation Sans" font-size="9" font-weight="normal" fill="#666" stroke="#f4f4f6" stroke-width="2" paint-order="stroke">다마쓰쿠리</text><text x="468" y="93" text-anchor="middle" font-family="Liberation Sans" font-size="7.5" font-weight="normal" fill="#777" stroke="#f4f4f6" stroke-width="2" paint-order="stroke">玉造</text><text x="30" y="127" text-anchor="middle" font-family="Liberation Sans" font-size="8.5" font-weight="normal" fill="#666" stroke="#f4f4f6" stroke-width="2" paint-order="stroke">도마에</text><text x="30" y="135" text-anchor="middle" font-family="Liberation Sans" font-size="7" font-weight="normal" fill="#777" stroke="#f4f4f6" stroke-width="2" paint-order="stroke">ドーム前</text><text x="60" y="148" text-anchor="middle" font-family="Liberation Sans" font-size="8.5" font-weight="normal" fill="#666" stroke="#f4f4f6" stroke-width="2" paint-order="stroke">사쿠라가와</text><text x="85" y="157" text-anchor="middle" font-family="Liberation Sans" font-size="7" font-weight="normal" fill="#777" stroke="#f4f4f6" stroke-width="2" paint-order="stroke">桜川</text><text x="149" y="163" text-anchor="middle" font-family="Liberation Sans" font-size="9" font-weight="normal" fill="#555" stroke="#f4f4f6" stroke-width="2" paint-order="stroke">JR난바</text><text x="149" y="172" text-anchor="middle" font-family="Liberation Sans" font-size="7.5" font-weight="normal" fill="#777" stroke="#f4f4f6" stroke-width="2" paint-order="stroke">JR難波</text><text x="45.6" y="195" text-anchor="middle" font-family="Liberation Sans" font-size="7.5" font-weight="normal" fill="#666" stroke="#f4f4f6" stroke-width="2" paint-order="stroke">Onami-dori</text><text x="133" y="200" text-anchor="middle" font-family="Liberation Sans" font-size="9" font-weight="normal" fill="#666" stroke="#f4f4f6" stroke-width="2" paint-order="stroke">난바 야사카 신사</text><text x="133" y="209" text-anchor="middle" font-family="Liberation Sans" font-size="7.5" font-weight="normal" fill="#777" stroke="#f4f4f6" stroke-width="2" paint-order="stroke">難波八阪神社</text><text x="64.6" y="223" text-anchor="middle" font-family="Liberation Sans" font-size="9" font-weight="normal" fill="#666" stroke="#f4f4f6" stroke-width="2" paint-order="stroke">아시하라초</text><text x="72" y="232" text-anchor="middle" font-family="Liberation Sans" font-size="7.5" font-weight="normal" fill="#777" stroke="#f4f4f6" stroke-width="2" paint-order="stroke">芦原町</text><text x="145.7" y="236" text-anchor="middle" font-family="Liberation Sans" font-size="9" font-weight="normal" fill="#666" stroke="#f4f4f6" stroke-width="2" paint-order="stroke">오시하라바시</text><text x="135" y="245" text-anchor="middle" font-family="Liberation Sans" font-size="7.5" font-weight="normal" fill="#777" stroke="#f4f4f6" stroke-width="2" paint-order="stroke">芦原橋</text><text x="226" y="152" text-anchor="middle" font-family="Liberation Sans" font-size="9" font-weight="normal" fill="#555" stroke="#f4f4f6" stroke-width="2" paint-order="stroke">긴테쓰닛폰바시</text><text x="226" y="161" text-anchor="middle" font-family="Liberation Sans" font-size="7.5" font-weight="normal" fill="#777" stroke="#f4f4f6" stroke-width="2" paint-order="stroke">近鉄日本橋</text><text x="11" y="166" text-anchor="middle" font-family="Liberation Sans" font-size="9" font-weight="normal" fill="#666" stroke="#f4f4f6" stroke-width="2" paint-order="stroke">다이쇼</text><text x="11" y="175" text-anchor="middle" font-family="Liberation Sans" font-size="8" font-weight="normal" fill="#777" stroke="#f4f4f6" stroke-width="2" paint-order="stroke">大正</text><text x="236" y="273" text-anchor="middle" font-family="Liberation Sans" font-size="9" font-weight="normal" fill="#666" stroke="#f4f4f6" stroke-width="2" paint-order="stroke">에비스초</text><text x="250" y="238" text-anchor="middle" font-family="Liberation Sans" font-size="8" font-weight="normal" fill="#666" stroke="#f4f4f6" stroke-width="2" paint-order="stroke">닛폰바시</text><text x="250" y="247" text-anchor="middle" font-family="Liberation Sans" font-size="8" font-weight="normal" fill="#777" stroke="#f4f4f6" stroke-width="2" paint-order="stroke">日本橋</text><text x="375" y="190" text-anchor="middle" font-family="Liberation Sans" font-size="11" font-weight="normal" fill="#555" stroke="#f4f4f6" stroke-width="2" paint-order="stroke">덴노지구</text><text x="375" y="202" text-anchor="middle" font-family="Liberation Sans" font-size="11" font-weight="normal" fill="#555" stroke="#f4f4f6" stroke-width="2" paint-order="stroke">天王寺区</text><text x="442" y="171" text-anchor="middle" font-family="Liberation Sans" font-size="9" font-weight="normal" fill="#555" stroke="#f4f4f6" stroke-width="2" paint-order="stroke">쓰루하시</text><text x="442" y="180" text-anchor="middle" font-family="Liberation Sans" font-size="7.5" font-weight="normal" fill="#777" stroke="#f4f4f6" stroke-width="2" paint-order="stroke">鶴橋</text><text x="465" y="214" text-anchor="middle" font-family="Liberation Sans" font-size="9" font-weight="normal" fill="#666" stroke="#f4f4f6" stroke-width="2" paint-order="stroke">미유키모리 신사</text><text x="465" y="223" text-anchor="middle" font-family="Liberation Sans" font-size="7.5" font-weight="normal" fill="#777" stroke="#f4f4f6" stroke-width="2" paint-order="stroke">御幸森天神宮</text><text x="477" y="244" text-anchor="middle" font-family="Liberation Sans" font-size="9" font-weight="normal" fill="#555" stroke="#f4f4f6" stroke-width="2" paint-order="stroke">모모다니</text><text x="470" y="253" text-anchor="middle" font-family="Liberation Sans" font-size="7.5" font-weight="normal" fill="#777" stroke="#f4f4f6" stroke-width="2" paint-order="stroke">桃谷</text><text x="515" y="18" text-anchor="middle" font-family="Liberation Sans" font-size="7" font-weight="normal" fill="#666" stroke="#f4f4f6" stroke-width="2" paint-order="stroke">Sakai</text><text x="191" y="125" text-anchor="middle" font-family="Liberation Sans" font-size="9.5" font-weight="normal" fill="#9a57d0" stroke="#f4f4f6" stroke-width="2" paint-order="stroke">도톤보리</text><text x="191" y="134" text-anchor="middle" font-family="Liberation Sans" font-size="7.5" font-weight="normal" fill="#9a57d0" stroke="#f4f4f6" stroke-width="2" paint-order="stroke">道頓堀</text><text x="262" y="202" text-anchor="middle" font-family="Liberation Sans" font-size="9.5" font-weight="normal" fill="#3a8ee6" stroke="#f4f4f6" stroke-width="2" paint-order="stroke">난바 파크스</text><text x="262" y="211" text-anchor="middle" font-family="Liberation Sans" font-size="8" font-weight="normal" fill="#3a8ee6" stroke="#f4f4f6" stroke-width="2" paint-order="stroke">なんばパークス</text><text x="373" y="235" text-anchor="middle" font-family="Liberation Sans" font-size="9.2" font-weight="normal" fill="#e04848" stroke="#f4f4f6" stroke-width="2" paint-order="stroke">Osaka International</text><text x="373" y="245" text-anchor="middle" font-family="Liberation Sans" font-size="9.2" font-weight="normal" fill="#e04848" stroke="#f4f4f6" stroke-width="2" paint-order="stroke">Medical &amp; Science Center</text><text x="386" y="254" text-anchor="middle" font-family="Liberation Sans" font-size="7.8" font-weight="normal" fill="#e06060" stroke="#f4f4f6" stroke-width="2" paint-order="stroke">大阪けいさつ病院</text><text x="396" y="263" text-anchor="middle" font-family="Liberation Sans" font-size="7.8" font-weight="normal" fill="#e06060" stroke="#f4f4f6" stroke-width="2" paint-order="stroke">종합병원</text><g><path d="M203.5 18 A6.5 6.5 0 1 1 216.5 18 L210 27.5 Z" fill="#6f8590" stroke="#fff" stroke-width="1"/><circle cx="210" cy="18" r="2.73" fill="#fff" opacity="0.9"/></g><g><path d="M215.5 125 A6.5 6.5 0 1 1 228.5 125 L222 134.5 Z" fill="#a65ee0" stroke="#fff" stroke-width="1"/><circle cx="222" cy="125" r="2.73" fill="#fff" opacity="0.9"/></g><g><path d="M175.0 200.7 A6.5 6.5 0 1 1 188.0 200.7 L181.5 210.2 Z" fill="#6f8590" stroke="#fff" stroke-width="1"/><circle cx="181.5" cy="200.7" r="2.73" fill="#fff" opacity="0.9"/></g><g><path d="M221.1 200.7 A6.5 6.5 0 1 1 234.1 200.7 L227.6 210.2 Z" fill="#2c9be8" stroke="#fff" stroke-width="1"/><circle cx="227.6" cy="200.7" r="2.73" fill="#fff" opacity="0.9"/></g><g><path d="M424.5 243 A6.5 6.5 0 1 1 437.5 243 L431 252.5 Z" fill="#e9434b" stroke="#fff" stroke-width="1"/><circle cx="431" cy="243" r="2.73" fill="#fff" opacity="0.9"/></g><g><path d="M505.5 214 A6.5 6.5 0 1 1 518.5 214 L512 223.5 Z" fill="#6f8590" stroke="#fff" stroke-width="1"/><circle cx="512" cy="214" r="2.73" fill="#fff" opacity="0.9"/></g><g><path d="M517.3 154.7 A6.5 6.5 0 1 1 530.3 154.7 L523.8 164.2 Z" fill="#20a464" stroke="#fff" stroke-width="1"/><circle cx="523.8" cy="154.7" r="2.73" fill="#fff" opacity="0.9"/></g><g><path d="M-4.5 130 A6.5 6.5 0 1 1 8.5 130 L2 139.5 Z" fill="#20a464" stroke="#fff" stroke-width="1"/><circle cx="2" cy="130" r="2.73" fill="#fff" opacity="0.9"/></g><circle cx="14" cy="131" r="3.5" fill="#5d7384"/><rect x="7" y="188" width="8" height="8" rx="1.5" fill="#2c3a8c" opacity="0"/><rect x="23" y="172" width="10" height="8" rx="1" fill="#fff"/><text x="28" y="178.5" text-anchor="middle" font-family="Liberation Sans" font-size="5.5" font-weight="bold" fill="#2e6fc6">JR</text><rect x="157" y="172" width="10" height="8" rx="1" fill="#fff"/><text x="162" y="178.5" text-anchor="middle" font-family="Liberation Sans" font-size="5.5" font-weight="bold" fill="#2e6fc6">JR</text><rect x="91.5" y="242" width="10" height="8" rx="1" fill="#fff"/><text x="96.5" y="248.5" text-anchor="middle" font-family="Liberation Sans" font-size="5.5" font-weight="bold" fill="#2e6fc6">JR</text><rect x="492" y="82" width="10" height="8" rx="1" fill="#fff"/><text x="497" y="88.5" text-anchor="middle" font-family="Liberation Sans" font-size="5.5" font-weight="bold" fill="#2e6fc6">JR</text><rect x="449" y="242" width="10" height="8" rx="1" fill="#fff"/><text x="454" y="248.5" text-anchor="middle" font-family="Liberation Sans" font-size="5.5" font-weight="bold" fill="#2e6fc6">JR</text><rect x="460" y="169" width="10" height="8" rx="1" fill="#fff"/><text x="465" y="175.5" text-anchor="middle" font-family="Liberation Sans" font-size="5.5" font-weight="bold" fill="#2e6fc6">JR</text><g transform="translate(267.9,122.6)"><path d="M0 15 C-2 9 -9 5 -9 -1 A9 9 0 1 1 9 -1 C9 5 2 9 0 15 Z" fill="#ea4335" stroke="#c5221f" stroke-width="0.6"/><circle cx="0" cy="-1" r="3.2" fill="#a50e0e"/></g><circle cx="511.5" cy="189" r="14.5" fill="#fff"/><g fill="none" stroke="#444" stroke-width="1.3"><path d="M508.5 181 L511.5 178 L514.5 181"/><path d="M508.5 197 L511.5 200 L514.5 197"/><path d="M503.5 186 L500.5 189 L503.5 192"/><path d="M519.5 186 L522.5 189 L519.5 192"/></g><rect x="497" y="228.5" width="29" height="29" rx="2" fill="#fff"/><g fill="#f5b400"><circle cx="511.5" cy="236" r="3.3"/><path d="M506 240 H517 V249 H515 V256 H508 V249 H506 Z"/></g><text x="8" y="270" font-family="Liberation Sans" font-size="12" font-weight="bold"><tspan fill="#4285f4">G</tspan><tspan fill="#ea4335">o</tspan><tspan fill="#fbbc05">o</tspan><tspan fill="#4285f4">g</tspan><tspan fill="#34a853">l</tspan><tspan fill="#ea4335">e</tspan></text><rect x="330" y="264" width="205" height="12" fill="#f5f5f5" opacity="0.8"/><text x="336" y="273" font-family="Liberation Sans" font-size="7" fill="#444">단축키   지도 데이터 ©2025 Google   약관   지도 오류 신고</text></svg></div>
</div>
<div style="position:absolute;left:189px;top:222px;width:396px;height:33px;border:4px solid #e41e20"></div><div style="position:absolute;left:179px;top:358px;width:292px;height:19.600000000000023px;border:4px solid #e41e20"></div><div style="position:absolute;left:870.4px;top:772.3px;width:125.10000000000002px;height:25.200000000000045px;border:4px solid #e41e20"></div>
</body></html>
